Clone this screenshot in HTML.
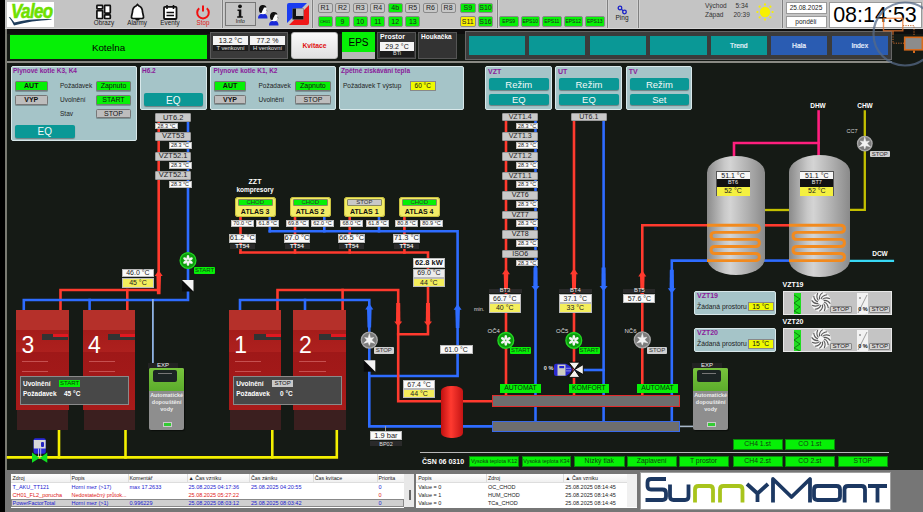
<!DOCTYPE html><html><head><meta charset="utf-8"><style>
html,body{margin:0;padding:0;}
body{width:923px;height:512px;overflow:hidden;background:#151a15;position:relative;font-family:"Liberation Sans",sans-serif;}
.a{position:absolute;}
.t{white-space:nowrap;overflow:visible;}
</style></head><body>
<div class="a" style="left:0px;top:0px;width:5px;height:512px;background:#000"></div>
<div class="a" style="left:5px;top:29px;width:2px;height:441px;background:#7a7a72"></div>
<div class="a" style="left:5px;top:0px;width:918px;height:29px;background:#c4c4c4"></div>
<div class="a" style="left:7px;top:29px;width:916px;height:5px;background:#0e0e0e"></div>
<div class="a" style="left:10px;top:34.7px;width:197px;height:24.2px;background:#06f006"></div>
<div class="a t" style="left:10px;top:34.8px;width:197px;height:25px;line-height:25px;font-size:9.8px;color:#000;font-weight:normal;text-align:center;">Kotelna</div>
<div class="a" style="left:210px;top:32px;width:78px;height:27px;background:#3a3a3a;border:1px solid #5c5c5c;box-sizing:border-box"></div>
<div class="a" style="left:213px;top:36px;width:35px;height:9px;background:#f4f4f4"></div>
<div class="a t" style="left:213px;top:36px;width:35px;height:9px;line-height:9px;font-size:7px;color:#111;font-weight:normal;text-align:center;">13.2 °C</div>
<div class="a" style="left:213px;top:45.2px;width:35px;height:6.3px;background:#1c1c1c"></div>
<div class="a t" style="left:213px;top:45.2px;width:35px;height:6.3px;line-height:6.3px;font-size:5.8px;color:#e0e0e0;font-weight:normal;text-align:center;">T venkovní</div>
<div class="a" style="left:250px;top:36px;width:35px;height:9px;background:#f4f4f4"></div>
<div class="a t" style="left:250px;top:36px;width:35px;height:9px;line-height:9px;font-size:7px;color:#111;font-weight:normal;text-align:center;">77.2 %</div>
<div class="a" style="left:250px;top:45.2px;width:35px;height:6.3px;background:#1c1c1c"></div>
<div class="a t" style="left:250px;top:45.2px;width:35px;height:6.3px;line-height:6.3px;font-size:5.8px;color:#e0e0e0;font-weight:normal;text-align:center;">H venkovní</div>
<div class="a" style="left:291px;top:32px;width:47px;height:27px;background:linear-gradient(#fafafa,#e0e0e0);border:1px solid #bbb;border-radius:3px;box-sizing:border-box"></div>
<div class="a t" style="left:291px;top:32px;width:47px;height:27px;line-height:27px;font-size:6.8px;color:#e01010;font-weight:bold;text-align:center;">Kvitace</div>
<div class="a" style="left:342px;top:32px;width:33px;height:20px;background:#06f006"></div>
<div class="a t" style="left:342px;top:33px;width:33px;height:20px;line-height:20px;font-size:10px;color:#000;font-weight:normal;text-align:center;">EPS</div>
<div class="a" style="left:342px;top:52px;width:33px;height:7px;background:#b8b8b8"></div>
<div class="a" style="left:377px;top:32px;width:39px;height:27px;background:#333;border:1px solid #555;box-sizing:border-box"></div>
<div class="a t" style="left:380px;top:33px;width:36px;height:8px;line-height:8px;font-size:7px;color:#fff;font-weight:bold;text-align:left;">Prostor</div>
<div class="a" style="left:380px;top:42px;width:34px;height:9px;background:#f4f4f4"></div>
<div class="a t" style="left:380px;top:42px;width:34px;height:9px;line-height:9px;font-size:7px;color:#111;font-weight:normal;text-align:center;">29.2 °C</div>
<div class="a" style="left:380px;top:51.3px;width:34px;height:5.7px;background:#1c1c1c"></div>
<div class="a t" style="left:380px;top:51.3px;width:34px;height:5.7px;line-height:5.7px;font-size:5.5px;color:#e0e0e0;font-weight:normal;text-align:center;">BTi</div>
<div class="a" style="left:418px;top:32px;width:39px;height:27px;background:#333;border:1px solid #555;box-sizing:border-box"></div>
<div class="a t" style="left:421px;top:33px;width:36px;height:8px;line-height:8px;font-size:6.5px;color:#fff;font-weight:bold;text-align:left;">Houkačka</div>
<div class="a" style="left:465px;top:31px;width:427px;height:29px;background:#3b3b3b;border:1px solid #666;box-sizing:border-box"></div>
<div class="a" style="left:469px;top:36px;width:56px;height:19px;background:#0a9896"></div>
<div class="a" style="left:529px;top:36px;width:56px;height:19px;background:#0a9896"></div>
<div class="a" style="left:590px;top:36px;width:56px;height:19px;background:#0a9896"></div>
<div class="a" style="left:650px;top:36px;width:56.5px;height:19px;background:#0a9896"></div>
<div class="a" style="left:710.5px;top:36px;width:56.5px;height:19px;background:#0a9896"></div>
<div class="a t" style="left:710.5px;top:36.3px;width:56.5px;height:19px;line-height:19px;font-size:6.8px;color:#eef4ff;font-weight:normal;text-align:center;-webkit-text-stroke:0.2px #eef4ff">Trend</div>
<div class="a" style="left:771px;top:36px;width:56px;height:19px;background:#2a5cb2"></div>
<div class="a t" style="left:771px;top:36.3px;width:56px;height:19px;line-height:19px;font-size:6.8px;color:#eef4ff;font-weight:normal;text-align:center;-webkit-text-stroke:0.2px #eef4ff">Hala</div>
<div class="a" style="left:831.5px;top:36px;width:56.5px;height:19px;background:#2a5cb2"></div>
<div class="a t" style="left:831.5px;top:36.3px;width:56.5px;height:19px;line-height:19px;font-size:6.8px;color:#eef4ff;font-weight:normal;text-align:center;-webkit-text-stroke:0.2px #eef4ff">Index</div>
<div class="a" style="left:7px;top:61px;width:885px;height:2px;background:#8a8a84"></div>
<div class="a" style="left:7px;top:2px;width:47px;height:25px;background:#fff"></div>
<div class="a t" style="left:10.5px;top:1px;width:60px;height:20px;line-height:20px;font-size:21px;color:#6ee000;font-weight:bold;text-align:left;font-style:italic;transform:scaleX(0.81);transform-origin:0 0;letter-spacing:-0.8px;-webkit-text-stroke:0.6px #6ee000">Valeo</div>
<svg class="a" style="left:7px;top:15px" width="48" height="12"><path d="M1.8 2 L3.2 2.2 Q5.5 5 7.5 7.6 Q22 3.6 44.5 4.2 L44.5 4.7 Q24 5.5 8 10.2 L7 10.5 Q5 6 1.8 2 Z" fill="#1f3d5c"/></svg>
<svg class="a" style="left:95px;top:4px" width="18" height="16"><g fill="#fff" stroke="#111" stroke-width="1.7"><rect x="1.9" y="1.3" width="5.7" height="3.6" rx="0.6"/><rect x="1.9" y="6.6" width="5.7" height="7.9" rx="0.6"/><rect x="9.6" y="1.3" width="5.7" height="7.9" rx="0.6"/><rect x="9.6" y="10.9" width="5.7" height="3.6" rx="0.6"/></g></svg>
<div class="a t" style="left:89px;top:20px;width:30px;height:6px;line-height:6px;font-size:6.3px;color:#1a1a1a;font-weight:normal;text-align:center;">Obrazy</div>
<svg class="a" style="left:129px;top:3px" width="17" height="18"><path d="M8.5 1.5 L10 3 Q13.5 4.5 13.5 9 L14.5 13.5 Q15 15 13 15.5 L4 15.5 Q2 15 2.5 13.5 L3.5 9 Q3.5 4.5 7 3 Z" fill="#fff" stroke="#111" stroke-width="1.7"/><ellipse cx="8.5" cy="16.3" rx="2.2" ry="1.2" fill="#111"/></svg>
<div class="a t" style="left:122px;top:20px;width:30px;height:6px;line-height:6px;font-size:6.3px;color:#1a1a1a;font-weight:normal;text-align:center;">Alarmy</div>
<svg class="a" style="left:162px;top:4px" width="17" height="16"><rect x="2" y="2.8" width="12.5" height="12.2" rx="1" fill="#fff" stroke="#111" stroke-width="1.8"/><path d="M5 1 V5 M11.5 1 V5" stroke="#111" stroke-width="1.6"/><path d="M4.5 8.5 H12 M4.5 11.5 H12" stroke="#111" stroke-width="1.4"/></svg>
<div class="a t" style="left:155px;top:20px;width:30px;height:6px;line-height:6px;font-size:6.3px;color:#1a1a1a;font-weight:normal;text-align:center;">Eventy</div>
<svg class="a" style="left:195px;top:4px" width="16" height="16"><path d="M4.2 4.3 A5.8 5.8 0 1 0 11.8 4.3" fill="none" stroke="#f01010" stroke-width="2"/><path d="M8 1.6 V7.6" stroke="#f01010" stroke-width="2"/></svg>
<div class="a t" style="left:188px;top:20px;width:30px;height:6px;line-height:6px;font-size:6.3px;color:#e01818;font-weight:normal;text-align:center;">Stop</div>
<div class="a" style="left:221px;top:0px;width:3px;height:27.6px;background:linear-gradient(90deg,#d0d0d0 0,#d0d0d0 33%,#808080 33%,#808080 66%,#d0d0d0 66%)"></div>
<div class="a" style="left:311px;top:0px;width:3px;height:27.6px;background:linear-gradient(90deg,#d0d0d0 0,#d0d0d0 33%,#808080 33%,#808080 66%,#d0d0d0 66%)"></div>
<div class="a" style="left:496px;top:0px;width:3px;height:27.6px;background:linear-gradient(90deg,#d0d0d0 0,#d0d0d0 33%,#808080 33%,#808080 66%,#d0d0d0 66%)"></div>
<div class="a" style="left:605.5px;top:0px;width:3px;height:27.6px;background:linear-gradient(90deg,#d0d0d0 0,#d0d0d0 33%,#808080 33%,#808080 66%,#d0d0d0 66%)"></div>
<div class="a" style="left:636.5px;top:0px;width:3px;height:27.6px;background:linear-gradient(90deg,#d0d0d0 0,#d0d0d0 33%,#808080 33%,#808080 66%,#d0d0d0 66%)"></div>
<div class="a" style="left:780.5px;top:0px;width:3px;height:27.6px;background:linear-gradient(90deg,#d0d0d0 0,#d0d0d0 33%,#808080 33%,#808080 66%,#d0d0d0 66%)"></div>
<div class="a" style="left:225px;top:2px;width:30.5px;height:24px;background:#c4c4c4;border:1.5px solid #777;box-sizing:border-box"></div>
<svg class="a" style="left:235px;top:4px" width="10" height="15"><circle cx="5" cy="2.3" r="1.9" fill="#111"/><path d="M2.5 5.5 H6.3 V12.3 H7.8 V13.8 H2.2 V12.3 H3.8 V7 H2.5 Z" fill="#111"/></svg>
<div class="a t" style="left:225px;top:18px;width:30.5px;height:6px;line-height:6px;font-size:5.5px;color:#222;font-weight:normal;text-align:center;">Info</div>
<svg class="a" style="left:257px;top:4px" width="11" height="15"><path d="M1 14.5 Q1 10.5 4 10 L8 10 Q10.5 10.5 10.5 14.5 Z" fill="#1a2ad8"/><ellipse cx="6" cy="6" rx="3.6" ry="4.2" fill="#fff"/><path d="M2.2 7.5 Q1 2 5 1 Q9 0.5 9.5 3.5 L7 3.5 Q6.5 5 5.5 6.5 L4.5 9 Q3 9.5 2.2 7.5 Z" fill="#111"/><path d="M9.3 6 L10.4 7" stroke="#333" stroke-width="0.7"/></svg>
<svg class="a" style="left:268px;top:10.5px" width="11" height="15"><path d="M1 14.5 Q1 10.5 4 10 L8 10 Q10.5 10.5 10.5 14.5 Z" fill="#1a2ad8"/><ellipse cx="6" cy="6" rx="3.6" ry="4.2" fill="#fff"/><path d="M2.2 7.5 Q1 2 5 1 Q9 0.5 9.5 3.5 L7 3.5 Q6.5 5 5.5 6.5 L4.5 9 Q3 9.5 2.2 7.5 Z" fill="#111"/><path d="M9.3 6 L10.4 7" stroke="#333" stroke-width="0.7"/></svg>
<svg class="a" style="left:287px;top:2.5px" width="22" height="22"><path d="M2 0 H20 L14.5 5.5 H5.5 V14.5 L0 20 V2 Q0 0 2 0 Z" fill="#1a3cf0"/><path d="M22 2 V20 Q22 22 20 22 H2 L7.5 16.5 H16.5 V7.5 Z" fill="#f01818"/><rect x="5.5" y="5.5" width="11" height="11" fill="#111"/><rect x="9" y="5.5" width="7.5" height="7.5" fill="#bdbdbd"/></svg>
<div class="a" style="left:317.5px;top:2.5px;width:15px;height:10.5px;background:#c8c8c8;border:1px solid #8a8a8a;border-radius:2px;box-sizing:border-box"></div>
<div class="a t" style="left:317.5px;top:2.5px;width:15px;height:10.5px;line-height:10.5px;font-size:7px;color:#222;font-weight:normal;text-align:center;">R1</div>
<div class="a" style="left:335px;top:2.5px;width:15px;height:10.5px;background:#c8c8c8;border:1px solid #8a8a8a;border-radius:2px;box-sizing:border-box"></div>
<div class="a t" style="left:335px;top:2.5px;width:15px;height:10.5px;line-height:10.5px;font-size:7px;color:#222;font-weight:normal;text-align:center;">R2</div>
<div class="a" style="left:352.7px;top:2.5px;width:15px;height:10.5px;background:#c8c8c8;border:1px solid #8a8a8a;border-radius:2px;box-sizing:border-box"></div>
<div class="a t" style="left:352.7px;top:2.5px;width:15px;height:10.5px;line-height:10.5px;font-size:7px;color:#222;font-weight:normal;text-align:center;">R3</div>
<div class="a" style="left:370.3px;top:2.5px;width:15px;height:10.5px;background:#c8c8c8;border:1px solid #8a8a8a;border-radius:2px;box-sizing:border-box"></div>
<div class="a t" style="left:370.3px;top:2.5px;width:15px;height:10.5px;line-height:10.5px;font-size:7px;color:#222;font-weight:normal;text-align:center;">R4</div>
<div class="a" style="left:387.7px;top:2.5px;width:15px;height:10.5px;background:#06f006;border:1px solid #8a8a8a;border-radius:2px;box-sizing:border-box"></div>
<div class="a t" style="left:387.7px;top:2.5px;width:15px;height:10.5px;line-height:10.5px;font-size:7px;color:#222;font-weight:normal;text-align:center;">4b</div>
<div class="a" style="left:405.3px;top:2.5px;width:15px;height:10.5px;background:#c8c8c8;border:1px solid #8a8a8a;border-radius:2px;box-sizing:border-box"></div>
<div class="a t" style="left:405.3px;top:2.5px;width:15px;height:10.5px;line-height:10.5px;font-size:7px;color:#222;font-weight:normal;text-align:center;">R5</div>
<div class="a" style="left:423px;top:2.5px;width:15px;height:10.5px;background:#c8c8c8;border:1px solid #8a8a8a;border-radius:2px;box-sizing:border-box"></div>
<div class="a t" style="left:423px;top:2.5px;width:15px;height:10.5px;line-height:10.5px;font-size:7px;color:#222;font-weight:normal;text-align:center;">R6</div>
<div class="a" style="left:440.6px;top:2.5px;width:15px;height:10.5px;background:#c8c8c8;border:1px solid #8a8a8a;border-radius:2px;box-sizing:border-box"></div>
<div class="a t" style="left:440.6px;top:2.5px;width:15px;height:10.5px;line-height:10.5px;font-size:7px;color:#222;font-weight:normal;text-align:center;">R8</div>
<div class="a" style="left:317.5px;top:15.5px;width:15px;height:11.5px;background:#06f006;border:1px solid #8a8a8a;border-radius:2px;box-sizing:border-box"></div>
<div class="a t" style="left:317.5px;top:15.5px;width:15px;height:11.5px;line-height:11.5px;font-size:4px;color:#222;font-weight:normal;text-align:center;">CH01</div>
<div class="a" style="left:335px;top:15.5px;width:15px;height:11.5px;background:#06f006;border:1px solid #8a8a8a;border-radius:2px;box-sizing:border-box"></div>
<div class="a t" style="left:335px;top:15.5px;width:15px;height:11.5px;line-height:11.5px;font-size:7px;color:#222;font-weight:normal;text-align:center;">9</div>
<div class="a" style="left:352.7px;top:15.5px;width:15px;height:11.5px;background:#06f006;border:1px solid #8a8a8a;border-radius:2px;box-sizing:border-box"></div>
<div class="a t" style="left:352.7px;top:15.5px;width:15px;height:11.5px;line-height:11.5px;font-size:7px;color:#222;font-weight:normal;text-align:center;">10</div>
<div class="a" style="left:370.3px;top:15.5px;width:15px;height:11.5px;background:#06f006;border:1px solid #8a8a8a;border-radius:2px;box-sizing:border-box"></div>
<div class="a t" style="left:370.3px;top:15.5px;width:15px;height:11.5px;line-height:11.5px;font-size:7px;color:#222;font-weight:normal;text-align:center;">11</div>
<div class="a" style="left:387.7px;top:15.5px;width:15px;height:11.5px;background:#06f006;border:1px solid #8a8a8a;border-radius:2px;box-sizing:border-box"></div>
<div class="a t" style="left:387.7px;top:15.5px;width:15px;height:11.5px;line-height:11.5px;font-size:7px;color:#222;font-weight:normal;text-align:center;">12</div>
<div class="a" style="left:405.3px;top:15.5px;width:15px;height:11.5px;background:#06f006;border:1px solid #8a8a8a;border-radius:2px;box-sizing:border-box"></div>
<div class="a t" style="left:405.3px;top:15.5px;width:15px;height:11.5px;line-height:11.5px;font-size:7px;color:#222;font-weight:normal;text-align:center;">13</div>
<div class="a" style="left:460px;top:2.5px;width:15.5px;height:10.5px;background:#06f006;border:1px solid #8a8a8a;border-radius:2px;box-sizing:border-box"></div>
<div class="a t" style="left:460px;top:2.5px;width:15.5px;height:10.5px;line-height:10.5px;font-size:7px;color:#222;font-weight:normal;text-align:center;">S9</div>
<div class="a" style="left:477.8px;top:2.5px;width:15.5px;height:10.5px;background:#06f006;border:1px solid #8a8a8a;border-radius:2px;box-sizing:border-box"></div>
<div class="a t" style="left:477.8px;top:2.5px;width:15.5px;height:10.5px;line-height:10.5px;font-size:7px;color:#222;font-weight:normal;text-align:center;">S10</div>
<div class="a" style="left:460px;top:15.5px;width:15.5px;height:11.5px;background:#f7f000;border:1px solid #8a8a8a;border-radius:2px;box-sizing:border-box"></div>
<div class="a t" style="left:460px;top:15.5px;width:15.5px;height:11.5px;line-height:11.5px;font-size:7px;color:#222;font-weight:normal;text-align:center;">S11</div>
<div class="a" style="left:477.8px;top:15.5px;width:15.5px;height:11.5px;background:#06f006;border:1px solid #8a8a8a;border-radius:2px;box-sizing:border-box"></div>
<div class="a t" style="left:477.8px;top:15.5px;width:15.5px;height:11.5px;line-height:11.5px;font-size:7px;color:#222;font-weight:normal;text-align:center;">S16</div>
<div class="a" style="left:499.0px;top:15.5px;width:19.5px;height:11.5px;background:#06f006;border:1px solid #8a8a8a;border-radius:2px;box-sizing:border-box"></div>
<div class="a t" style="left:499.0px;top:15.5px;width:19.5px;height:11.5px;line-height:11.5px;font-size:5px;color:#222;font-weight:normal;text-align:center;">EPS9</div>
<div class="a" style="left:520.5px;top:15.5px;width:19.5px;height:11.5px;background:#06f006;border:1px solid #8a8a8a;border-radius:2px;box-sizing:border-box"></div>
<div class="a t" style="left:520.5px;top:15.5px;width:19.5px;height:11.5px;line-height:11.5px;font-size:5px;color:#222;font-weight:normal;text-align:center;">EPS10</div>
<div class="a" style="left:542.0px;top:15.5px;width:19.5px;height:11.5px;background:#06f006;border:1px solid #8a8a8a;border-radius:2px;box-sizing:border-box"></div>
<div class="a t" style="left:542.0px;top:15.5px;width:19.5px;height:11.5px;line-height:11.5px;font-size:5px;color:#222;font-weight:normal;text-align:center;">EPS11</div>
<div class="a" style="left:563.5px;top:15.5px;width:19.5px;height:11.5px;background:#06f006;border:1px solid #8a8a8a;border-radius:2px;box-sizing:border-box"></div>
<div class="a t" style="left:563.5px;top:15.5px;width:19.5px;height:11.5px;line-height:11.5px;font-size:5px;color:#222;font-weight:normal;text-align:center;">EPS12</div>
<div class="a" style="left:585.0px;top:15.5px;width:19.5px;height:11.5px;background:#06f006;border:1px solid #8a8a8a;border-radius:2px;box-sizing:border-box"></div>
<div class="a t" style="left:585.0px;top:15.5px;width:19.5px;height:11.5px;line-height:11.5px;font-size:5px;color:#222;font-weight:normal;text-align:center;">EPS13</div>
<svg class="a" style="left:617px;top:5px" width="11" height="10"><circle cx="3" cy="3" r="1.8" fill="none" stroke="#1a22c8" stroke-width="1.3"/><circle cx="7.5" cy="7" r="1.8" fill="none" stroke="#1a22c8" stroke-width="1.3"/><path d="M4.3 4.3 L6.2 5.7" stroke="#1a22c8" stroke-width="1.2"/></svg>
<div class="a t" style="left:607px;top:14px;width:30px;height:7px;line-height:7px;font-size:6.5px;color:#222;font-weight:normal;text-align:center;">Ping</div>
<div class="a t" style="left:705px;top:1.5px;width:30px;height:7px;line-height:7px;font-size:6.5px;color:#333;font-weight:normal;text-align:left;">Východ</div>
<div class="a t" style="left:735.5px;top:1.5px;width:20px;height:7px;line-height:7px;font-size:6.5px;color:#333;font-weight:normal;text-align:left;">5:34</div>
<div class="a t" style="left:705px;top:11px;width:30px;height:7px;line-height:7px;font-size:6.5px;color:#333;font-weight:normal;text-align:left;">Západ</div>
<div class="a t" style="left:733.5px;top:11px;width:20px;height:7px;line-height:7px;font-size:6.5px;color:#333;font-weight:normal;text-align:left;">20:39</div>
<svg class="a" style="left:754px;top:1px" width="22" height="22"><g fill="#f8f000"><circle cx="11" cy="11" r="5.2"/><circle cx="18.6" cy="11.0" r="1.1"/><circle cx="16.374012415117463" cy="16.374010658917918" r="1.1"/><circle cx="11.000002483641214" cy="18.599999999999593" r="1.1"/><circle cx="5.6259910972822" cy="16.374014171316432" r="1.1"/><circle cx="3.400000000001624" cy="11.000004967282427" r="1.1"/><circle cx="5.625984072485171" cy="5.625992853482894" r="1.1"/><circle cx="10.999992549076362" cy="3.4000000000036534" r="1.1"/><circle cx="16.374005390315844" cy="5.625982316287351" r="1.1"/></g></svg>
<div class="a" style="left:785.5px;top:2px;width:41px;height:11.5px;background:#fff;border:1px solid #9a9a9a;box-sizing:border-box"></div>
<div class="a t" style="left:785.5px;top:2px;width:41px;height:11.5px;line-height:11.5px;font-size:6.5px;color:#222;font-weight:normal;text-align:center;">25.08.2025</div>
<div class="a" style="left:785.5px;top:15.5px;width:41px;height:12px;background:#fff;border:1px solid #9a9a9a;box-sizing:border-box"></div>
<div class="a t" style="left:785.5px;top:15.5px;width:41px;height:12px;line-height:12px;font-size:6.5px;color:#222;font-weight:normal;text-align:center;">pondělí</div>
<div class="a" style="left:828.5px;top:2px;width:93px;height:26px;background:#fff;border:1px solid #9a9a9a;box-sizing:border-box"></div>
<div class="a t" style="left:828.5px;top:2px;width:93px;height:26px;line-height:26px;font-size:21.5px;color:#000;font-weight:normal;text-align:center;">08:14:53</div>
<div class="a" style="left:5px;top:27.6px;width:918px;height:1.4px;background:#d6d6d6"></div>
<div class="a" style="left:11px;top:66px;width:126px;height:75px;background:#a5c4c8;border:1px solid #d8e8ea;border-radius:2px;box-sizing:border-box"></div>
<div class="a t" style="left:13px;top:67px;width:120px;height:8px;line-height:8px;font-size:6.5px;color:#8a1a9a;font-weight:bold;text-align:left;">Plynové kotle K3, K4</div>
<div class="a" style="left:15px;top:81px;width:32.5px;height:10px;background:#06f006;border:1px solid #777;border-radius:1.5px;box-sizing:border-box;box-shadow:0 1px 0 rgba(0,0,0,0.25)"></div>
<div class="a t" style="left:15px;top:81px;width:32.5px;height:10px;line-height:10px;font-size:7px;color:#111;font-weight:bold;text-align:center;">AUT</div>
<div class="a" style="left:15px;top:95px;width:32.5px;height:9.5px;background:#bdbdbd;border:1px solid #777;border-radius:1.5px;box-sizing:border-box;box-shadow:0 1px 0 rgba(0,0,0,0.25)"></div>
<div class="a t" style="left:15px;top:95px;width:32.5px;height:9.5px;line-height:9.5px;font-size:7px;color:#111;font-weight:bold;text-align:center;">VYP</div>
<div class="a t" style="left:60px;top:81px;width:40px;height:10px;line-height:10px;font-size:6.5px;color:#1e1e1e;font-weight:normal;text-align:left;">Požadavek</div>
<div class="a t" style="left:60px;top:95px;width:40px;height:9.5px;line-height:9.5px;font-size:6.5px;color:#1e1e1e;font-weight:normal;text-align:left;">Uvolnění</div>
<div class="a t" style="left:60px;top:108.5px;width:40px;height:9.5px;line-height:9.5px;font-size:6.5px;color:#1e1e1e;font-weight:normal;text-align:left;">Stav</div>
<div class="a" style="left:96px;top:81px;width:35px;height:10px;background:#06f006;border:1px solid #777;border-radius:1.5px;box-sizing:border-box;box-shadow:0 1px 0 rgba(0,0,0,0.25)"></div>
<div class="a t" style="left:96px;top:81px;width:35px;height:10px;line-height:10px;font-size:7px;color:#111;font-weight:normal;text-align:center;">Zapnuto</div>
<div class="a" style="left:96px;top:95px;width:35px;height:9.5px;background:#06f006;border:1px solid #777;border-radius:1.5px;box-sizing:border-box;box-shadow:0 1px 0 rgba(0,0,0,0.25)"></div>
<div class="a t" style="left:96px;top:95px;width:35px;height:9.5px;line-height:9.5px;font-size:7px;color:#111;font-weight:normal;text-align:center;">START</div>
<div class="a" style="left:96px;top:108.5px;width:35px;height:9.5px;background:#bdbdbd;border:1px solid #777;border-radius:1.5px;box-sizing:border-box;box-shadow:0 1px 0 rgba(0,0,0,0.25)"></div>
<div class="a t" style="left:96px;top:108.5px;width:35px;height:9.5px;line-height:9.5px;font-size:7px;color:#111;font-weight:normal;text-align:center;">STOP</div>
<div class="a" style="left:15px;top:124.5px;width:59.5px;height:13px;background:#0a9896;border-radius:2px;box-shadow:0 1px 1px rgba(0,0,0,0.35)"></div>
<div class="a t" style="left:15px;top:125.0px;width:59.5px;height:13px;line-height:13px;font-size:10px;color:#f4f8f8;font-weight:normal;text-align:center;">EQ</div>
<div class="a" style="left:139.5px;top:66px;width:67.5px;height:43.5px;background:#a5c4c8;border:1px solid #d8e8ea;border-radius:2px;box-sizing:border-box"></div>
<div class="a t" style="left:142px;top:67px;width:40px;height:8px;line-height:8px;font-size:6.5px;color:#8a1a9a;font-weight:bold;text-align:left;">H6.2</div>
<div class="a" style="left:143.5px;top:93px;width:59.5px;height:13px;background:#0a9896;border-radius:2px;box-shadow:0 1px 1px rgba(0,0,0,0.35)"></div>
<div class="a t" style="left:143.5px;top:93.5px;width:59.5px;height:13px;line-height:13px;font-size:10px;color:#f4f8f8;font-weight:normal;text-align:center;">EQ</div>
<div class="a" style="left:210px;top:66px;width:125.5px;height:43.5px;background:#a5c4c8;border:1px solid #d8e8ea;border-radius:2px;box-sizing:border-box"></div>
<div class="a t" style="left:213.5px;top:67px;width:120px;height:8px;line-height:8px;font-size:6.5px;color:#8a1a9a;font-weight:bold;text-align:left;">Plynové kotle K1, K2</div>
<div class="a" style="left:213.8px;top:81px;width:32.5px;height:10px;background:#06f006;border:1px solid #777;border-radius:1.5px;box-sizing:border-box;box-shadow:0 1px 0 rgba(0,0,0,0.25)"></div>
<div class="a t" style="left:213.8px;top:81px;width:32.5px;height:10px;line-height:10px;font-size:7px;color:#111;font-weight:bold;text-align:center;">AUT</div>
<div class="a" style="left:213.8px;top:94.6px;width:32.5px;height:9.6px;background:#bdbdbd;border:1px solid #777;border-radius:1.5px;box-sizing:border-box;box-shadow:0 1px 0 rgba(0,0,0,0.25)"></div>
<div class="a t" style="left:213.8px;top:94.6px;width:32.5px;height:9.6px;line-height:9.6px;font-size:7px;color:#111;font-weight:bold;text-align:center;">VYP</div>
<div class="a t" style="left:258.5px;top:81px;width:40px;height:10px;line-height:10px;font-size:6.5px;color:#1e1e1e;font-weight:normal;text-align:left;">Požadavek</div>
<div class="a t" style="left:258.5px;top:94.6px;width:40px;height:9.6px;line-height:9.6px;font-size:6.5px;color:#1e1e1e;font-weight:normal;text-align:left;">Uvolnění</div>
<div class="a" style="left:295.2px;top:81px;width:35.4px;height:10px;background:#06f006;border:1px solid #777;border-radius:1.5px;box-sizing:border-box;box-shadow:0 1px 0 rgba(0,0,0,0.25)"></div>
<div class="a t" style="left:295.2px;top:81px;width:35.4px;height:10px;line-height:10px;font-size:7px;color:#111;font-weight:normal;text-align:center;">Zapnuto</div>
<div class="a" style="left:295.2px;top:94.6px;width:35.4px;height:9.6px;background:#bdbdbd;border:1px solid #777;border-radius:1.5px;box-sizing:border-box;box-shadow:0 1px 0 rgba(0,0,0,0.25)"></div>
<div class="a t" style="left:295.2px;top:94.6px;width:35.4px;height:9.6px;line-height:9.6px;font-size:7px;color:#111;font-weight:normal;text-align:center;">STOP</div>
<div class="a" style="left:338.7px;top:66px;width:125.6px;height:43.5px;background:#a5c4c8;border:1px solid #d8e8ea;border-radius:2px;box-sizing:border-box"></div>
<div class="a t" style="left:341px;top:67px;width:120px;height:8px;line-height:8px;font-size:6.5px;color:#8a1a9a;font-weight:bold;text-align:left;">Zpětné získávání tepla</div>
<div class="a t" style="left:343px;top:81px;width:70px;height:9.5px;line-height:9.5px;font-size:6.5px;color:#1e1e1e;font-weight:normal;text-align:left;">Požadavek T výstup</div>
<div class="a" style="left:410px;top:81px;width:25.5px;height:9.5px;background:#eefa00;border:1px solid #888;box-sizing:border-box"></div>
<div class="a t" style="left:410px;top:81px;width:25.5px;height:9.5px;line-height:9.5px;font-size:6.5px;color:#111;font-weight:normal;text-align:center;">60 °C</div>
<div class="a" style="left:485px;top:66px;width:67px;height:43.6px;background:#a5c4c8;border:1px solid #d8e8ea;border-radius:2px;box-sizing:border-box"></div>
<div class="a t" style="left:488px;top:67.5px;width:30px;height:8px;line-height:8px;font-size:7px;color:#8a1a9a;font-weight:bold;text-align:left;">VZT</div>
<div class="a" style="left:489px;top:78px;width:59.5px;height:12.3px;background:#0a9896;border-radius:2px;box-shadow:0 1px 1px rgba(0,0,0,0.35)"></div>
<div class="a t" style="left:489px;top:78.5px;width:59.5px;height:12.3px;line-height:12.3px;font-size:9.5px;color:#f4f8f8;font-weight:normal;text-align:center;">Režim</div>
<div class="a" style="left:489px;top:93.7px;width:59.5px;height:11.8px;background:#0a9896;border-radius:2px;box-shadow:0 1px 1px rgba(0,0,0,0.35)"></div>
<div class="a t" style="left:489px;top:94.2px;width:59.5px;height:11.8px;line-height:11.8px;font-size:9.5px;color:#f4f8f8;font-weight:normal;text-align:center;">EQ</div>
<div class="a" style="left:555px;top:66px;width:67.4px;height:43.6px;background:#a5c4c8;border:1px solid #d8e8ea;border-radius:2px;box-sizing:border-box"></div>
<div class="a t" style="left:558px;top:67.5px;width:30px;height:8px;line-height:8px;font-size:7px;color:#8a1a9a;font-weight:bold;text-align:left;">UT</div>
<div class="a" style="left:559px;top:78px;width:59.900000000000006px;height:12.3px;background:#0a9896;border-radius:2px;box-shadow:0 1px 1px rgba(0,0,0,0.35)"></div>
<div class="a t" style="left:559px;top:78.5px;width:59.900000000000006px;height:12.3px;line-height:12.3px;font-size:9.5px;color:#f4f8f8;font-weight:normal;text-align:center;">Režim</div>
<div class="a" style="left:559px;top:93.7px;width:59.900000000000006px;height:11.8px;background:#0a9896;border-radius:2px;box-shadow:0 1px 1px rgba(0,0,0,0.35)"></div>
<div class="a t" style="left:559px;top:94.2px;width:59.900000000000006px;height:11.8px;line-height:11.8px;font-size:9.5px;color:#f4f8f8;font-weight:normal;text-align:center;">EQ</div>
<div class="a" style="left:625.8px;top:66px;width:66.7px;height:43.6px;background:#a5c4c8;border:1px solid #d8e8ea;border-radius:2px;box-sizing:border-box"></div>
<div class="a t" style="left:628.8px;top:67.5px;width:30px;height:8px;line-height:8px;font-size:7px;color:#8a1a9a;font-weight:bold;text-align:left;">TV</div>
<div class="a" style="left:629.8px;top:78px;width:59.2px;height:12.3px;background:#0a9896;border-radius:2px;box-shadow:0 1px 1px rgba(0,0,0,0.35)"></div>
<div class="a t" style="left:629.8px;top:78.5px;width:59.2px;height:12.3px;line-height:12.3px;font-size:9.5px;color:#f4f8f8;font-weight:normal;text-align:center;">Režim</div>
<div class="a" style="left:629.8px;top:93.7px;width:59.2px;height:11.8px;background:#0a9896;border-radius:2px;box-shadow:0 1px 1px rgba(0,0,0,0.35)"></div>
<div class="a t" style="left:629.8px;top:94.2px;width:59.2px;height:11.8px;line-height:11.8px;font-size:9.5px;color:#f4f8f8;font-weight:normal;text-align:center;">Set</div>
<svg class="a" style="left:0;top:0" width="923" height="512"><path d="M158.7 121 L158.7 290 L60.5 290 L60.5 310" stroke="#ff3a2e" stroke-width="2.6" fill="none" stroke-linejoin="miter" stroke-linecap="square"/><path d="M127.3 290 L127.3 310" stroke="#ff3a2e" stroke-width="2.6" fill="none" stroke-linejoin="miter" stroke-linecap="square"/><path d="M154.7 276.0 L158.7 270.2 L162.7 276.0 Z" fill="#ff3a2e"/><path d="M156.39999999999998 275.2 H161.0 L160.5 294.2 H156.89999999999998 Z" fill="#ff3a2e"/><path d="M188 121 L188 300 L23.8 300 L23.8 310" stroke="#2e6cff" stroke-width="2.6" fill="none" stroke-linejoin="miter" stroke-linecap="square"/><path d="M89.6 300 L89.6 310" stroke="#2e6cff" stroke-width="2.6" fill="none" stroke-linejoin="miter" stroke-linecap="square"/><path d="M152.9 300 L152.9 363" stroke="#8fb2e2" stroke-width="1.8" fill="none" stroke-linejoin="miter" stroke-linecap="square"/><path d="M240.5 217 L240.5 252.5" stroke="#ff3a2e" stroke-width="2.6" fill="none" stroke-linejoin="miter" stroke-linecap="square"/><path d="M295 217 L295 252.5" stroke="#ff3a2e" stroke-width="2.6" fill="none" stroke-linejoin="miter" stroke-linecap="square"/><path d="M349.7 217 L349.7 252.5" stroke="#ff3a2e" stroke-width="2.6" fill="none" stroke-linejoin="miter" stroke-linecap="square"/><path d="M404.4 217 L404.4 252.5" stroke="#ff3a2e" stroke-width="2.6" fill="none" stroke-linejoin="miter" stroke-linecap="square"/><path d="M240.5 252.5 L428 252.5 L428 334.2 L398.2 334.2" stroke="#ff3a2e" stroke-width="2.6" fill="none" stroke-linejoin="miter" stroke-linecap="square"/><path d="M269.8 217 L269.8 231.2" stroke="#2e6cff" stroke-width="2.6" fill="none" stroke-linejoin="miter" stroke-linecap="square"/><path d="M324.3 217 L324.3 231.2" stroke="#2e6cff" stroke-width="2.6" fill="none" stroke-linejoin="miter" stroke-linecap="square"/><path d="M379 217 L379 231.2" stroke="#2e6cff" stroke-width="2.6" fill="none" stroke-linejoin="miter" stroke-linecap="square"/><path d="M269.8 231.2 L457.6 231.2 L457.6 376 L369.3 376" stroke="#2e6cff" stroke-width="2.6" fill="none" stroke-linejoin="miter" stroke-linecap="square"/><path d="M277.5 310 L277.5 290 L398.2 290 L398.2 401.2 L492 401.2" stroke="#ff3a2e" stroke-width="2.6" fill="none" stroke-linejoin="miter" stroke-linecap="square"/><path d="M342.6 290 L342.6 310" stroke="#ff3a2e" stroke-width="2.6" fill="none" stroke-linejoin="miter" stroke-linecap="square"/><path d="M394.2 321.40000000000003 L398.2 326.6 L402.2 321.40000000000003 Z" fill="#ff3a2e"/><path d="M396.0 322.0 H400.4 L400.2 303.0 H396.2 Z" fill="#ff3a2e"/><path d="M424 321.40000000000003 L428 326.6 L432 321.40000000000003 Z" fill="#ff3a2e"/><path d="M425.8 322.0 H430.2 L430 303.0 H426 Z" fill="#ff3a2e"/><path d="M240 310 L240 300 L369.3 300 L369.3 426.4 L492 426.4" stroke="#2e6cff" stroke-width="2.6" fill="none" stroke-linejoin="miter" stroke-linecap="square"/><path d="M305 300 L305 310" stroke="#2e6cff" stroke-width="2.6" fill="none" stroke-linejoin="miter" stroke-linecap="square"/><path d="M365.3 309.40000000000003 L369.3 303.6 L373.3 309.40000000000003 Z" fill="#2e6cff"/><path d="M367.0 308.6 H371.6 L371.1 327.6 H367.5 Z" fill="#2e6cff"/><path d="M453.6 309.7 L457.6 303.9 L461.6 309.7 Z" fill="#2e6cff"/><path d="M455.3 308.9 H459.90000000000003 L459.40000000000003 327.9 H455.8 Z" fill="#2e6cff"/><path d="M385.5 426.4 L385.5 431" stroke="#9a9a9a" stroke-width="1" fill="none" stroke-linejoin="miter" stroke-linecap="square"/><path d="M8 457.4 L336.8 457.4 L336.8 430" stroke="#f4f000" stroke-width="2.6" fill="none" stroke-linejoin="miter" stroke-linecap="square"/><path d="M59 430 L59 457.4" stroke="#f4f000" stroke-width="2.6" fill="none" stroke-linejoin="miter" stroke-linecap="square"/><path d="M125.5 430 L125.5 457.4" stroke="#f4f000" stroke-width="2.6" fill="none" stroke-linejoin="miter" stroke-linecap="square"/><path d="M272.3 430 L272.3 457.4" stroke="#f4f000" stroke-width="2.6" fill="none" stroke-linejoin="miter" stroke-linecap="square"/><path d="M506 121 L506 395" stroke="#ff3a2e" stroke-width="2.6" fill="none" stroke-linejoin="miter" stroke-linecap="square"/><path d="M535.5 121 L535.5 421" stroke="#2e6cff" stroke-width="2.6" fill="none" stroke-linejoin="miter" stroke-linecap="square"/><path d="M574 121 L574 395" stroke="#ff3a2e" stroke-width="2.6" fill="none" stroke-linejoin="miter" stroke-linecap="square"/><path d="M603.6 121 L603.6 421" stroke="#2e6cff" stroke-width="2.6" fill="none" stroke-linejoin="miter" stroke-linecap="square"/><path d="M502 274.3 L506 268.5 L510 274.3 Z" fill="#ff3a2e"/><path d="M503.7 273.5 H508.3 L507.8 292.5 H504.2 Z" fill="#ff3a2e"/><path d="M531.5 286.0 L535.5 291.2 L539.5 286.0 Z" fill="#2e6cff"/><path d="M533.3 286.59999999999997 H537.7 L537.5 267.59999999999997 H533.5 Z" fill="#2e6cff"/><path d="M570 274.3 L574 268.5 L578 274.3 Z" fill="#ff3a2e"/><path d="M571.7 273.5 H576.3 L575.8 292.5 H572.2 Z" fill="#ff3a2e"/><path d="M599.6 286.0 L603.6 291.2 L607.6 286.0 Z" fill="#2e6cff"/><path d="M601.4 286.59999999999997 H605.8000000000001 L605.6 267.59999999999997 H601.6 Z" fill="#2e6cff"/><path d="M642.3 395 L642.3 225.3 L707 225.3" stroke="#ff3a2e" stroke-width="2.6" fill="none" stroke-linejoin="miter" stroke-linecap="square"/><path d="M765 225.3 L789 225.3" stroke="#ff3a2e" stroke-width="2.6" fill="none" stroke-linejoin="miter" stroke-linecap="square"/><path d="M638.3 276.40000000000003 L642.3 270.6 L646.3 276.40000000000003 Z" fill="#ff3a2e"/><path d="M640.0 275.6 H644.5999999999999 L644.0999999999999 294.6 H640.5 Z" fill="#ff3a2e"/><path d="M667.8 288.2 L671.8 293.4 L675.8 288.2 Z" fill="#2e6cff"/><path d="M669.5999999999999 288.79999999999995 H674.0 L673.8 269.79999999999995 H669.8 Z" fill="#2e6cff"/><path d="M671.8 421 L671.8 260.6 L707 260.6" stroke="#2e6cff" stroke-width="2.6" fill="none" stroke-linejoin="miter" stroke-linecap="square"/><path d="M765 260.6 L789 260.6" stroke="#2e6cff" stroke-width="2.6" fill="none" stroke-linejoin="miter" stroke-linecap="square"/><path d="M850 260.8 L893 260.8" stroke="#38d8f4" stroke-width="2.2" fill="none" stroke-linejoin="miter" stroke-linecap="square"/><path d="M734 156 L734 143 L818.6 143" stroke="#ff1f7e" stroke-width="2.6" fill="none" stroke-linejoin="miter" stroke-linecap="square"/><path d="M818.6 111.5 L818.6 155" stroke="#ff1f7e" stroke-width="2.6" fill="none" stroke-linejoin="miter" stroke-linecap="square"/><path d="M765 210 L789 210" stroke="#c4c000" stroke-width="2.3" fill="none" stroke-linejoin="miter" stroke-linecap="square"/><path d="M850 209.8 L864.8 209.8 L864.8 111.5" stroke="#c4c000" stroke-width="2.3" fill="none" stroke-linejoin="miter" stroke-linecap="square"/><path d="M575 370 L603.6 370" stroke="#2e6cff" stroke-width="2.6" fill="none" stroke-linejoin="miter" stroke-linecap="square"/><path d="M680 426.4 L693 426.4" stroke="#a8b8c8" stroke-width="1.6" fill="none" stroke-linejoin="miter" stroke-linecap="square"/></svg>
<div class="a" style="left:16.9px;top:410px;width:51.2px;height:20px;background:#3b1f1f"></div>
<div class="a" style="left:15.9px;top:309.5px;width:52.7px;height:100.5px;background:linear-gradient(#b5302a 0,#b5302a 20px,#a51c1a 20px,#ad201e 42px,#9f1818 42.5px,#a81b1a 100%)"></div>
<div class="a" style="left:41.5px;top:333.5px;width:26.6px;height:6.3px;background:#333"></div>
<div class="a" style="left:53.4px;top:333.5px;width:14.7px;height:3.8px;background:#e01820"></div>
<div class="a" style="left:21.9px;top:361px;width:26.5px;height:1px;background:#c65050"></div>
<div class="a" style="left:21.9px;top:371.2px;width:26.5px;height:1px;background:#c65050"></div>
<div class="a t" style="left:21.4px;top:334.5px;width:20px;height:20px;line-height:20px;font-size:23px;color:#fff;font-weight:normal;text-align:left;">3</div>
<div class="a" style="left:83.6px;top:410px;width:51.2px;height:20px;background:#3b1f1f"></div>
<div class="a" style="left:82.6px;top:309.5px;width:52.7px;height:100.5px;background:linear-gradient(#b5302a 0,#b5302a 20px,#a51c1a 20px,#ad201e 42px,#9f1818 42.5px,#a81b1a 100%)"></div>
<div class="a" style="left:108.19999999999999px;top:333.5px;width:26.6px;height:6.3px;background:#333"></div>
<div class="a" style="left:120.1px;top:333.5px;width:14.7px;height:3.8px;background:#e01820"></div>
<div class="a" style="left:88.6px;top:361px;width:26.5px;height:1px;background:#c65050"></div>
<div class="a" style="left:88.6px;top:371.2px;width:26.5px;height:1px;background:#c65050"></div>
<div class="a t" style="left:88.1px;top:334.5px;width:20px;height:20px;line-height:20px;font-size:23px;color:#fff;font-weight:normal;text-align:left;">4</div>
<div class="a" style="left:229.7px;top:410px;width:51.2px;height:20px;background:#3b1f1f"></div>
<div class="a" style="left:228.7px;top:309.5px;width:52.7px;height:100.5px;background:linear-gradient(#b5302a 0,#b5302a 20px,#a51c1a 20px,#ad201e 42px,#9f1818 42.5px,#a81b1a 100%)"></div>
<div class="a" style="left:254.29999999999998px;top:333.5px;width:26.6px;height:6.3px;background:#333"></div>
<div class="a" style="left:266.2px;top:333.5px;width:14.7px;height:3.8px;background:#e01820"></div>
<div class="a" style="left:234.7px;top:361px;width:26.5px;height:1px;background:#c65050"></div>
<div class="a" style="left:234.7px;top:371.2px;width:26.5px;height:1px;background:#c65050"></div>
<div class="a t" style="left:234.2px;top:334.5px;width:20px;height:20px;line-height:20px;font-size:23px;color:#fff;font-weight:normal;text-align:left;">1</div>
<div class="a" style="left:294.4px;top:410px;width:51.2px;height:20px;background:#3b1f1f"></div>
<div class="a" style="left:293.4px;top:309.5px;width:52.7px;height:100.5px;background:linear-gradient(#b5302a 0,#b5302a 20px,#a51c1a 20px,#ad201e 42px,#9f1818 42.5px,#a81b1a 100%)"></div>
<div class="a" style="left:319.0px;top:333.5px;width:26.6px;height:6.3px;background:#333"></div>
<div class="a" style="left:330.9px;top:333.5px;width:14.7px;height:3.8px;background:#e01820"></div>
<div class="a" style="left:299.4px;top:361px;width:26.5px;height:1px;background:#c65050"></div>
<div class="a" style="left:299.4px;top:371.2px;width:26.5px;height:1px;background:#c65050"></div>
<div class="a t" style="left:298.9px;top:334.5px;width:20px;height:20px;line-height:20px;font-size:23px;color:#fff;font-weight:normal;text-align:left;">2</div>
<div class="a" style="left:20px;top:375.7px;width:109.3px;height:29.3px;background:#484848;border:1px solid #8a8a8a;box-sizing:border-box"></div>
<div class="a t" style="left:23px;top:378.5px;width:40px;height:9px;line-height:9px;font-size:6.5px;color:#fff;font-weight:bold;text-align:left;">Uvolnění</div>
<div class="a t" style="left:23px;top:388.5px;width:40px;height:9px;line-height:9px;font-size:6.5px;color:#fff;font-weight:bold;text-align:left;">Požadavek</div>
<div class="a" style="left:59px;top:379.8px;width:21.0px;height:6.8px;background:#06f006"></div>
<div class="a t" style="left:59px;top:379.8px;width:21px;height:6.8px;line-height:6.8px;font-size:6px;color:#0a3a0a;font-weight:normal;text-align:center;">START</div>
<div class="a t" style="left:64px;top:388.5px;width:30px;height:9px;line-height:9px;font-size:6.5px;color:#fff;font-weight:bold;text-align:left;">45 °C</div>
<div class="a" style="left:233.2px;top:375.7px;width:108.8px;height:29.3px;background:#484848;border:1px solid #8a8a8a;box-sizing:border-box"></div>
<div class="a t" style="left:236.2px;top:378.5px;width:40px;height:9px;line-height:9px;font-size:6.5px;color:#fff;font-weight:bold;text-align:left;">Uvolnění</div>
<div class="a t" style="left:236.2px;top:388.5px;width:40px;height:9px;line-height:9px;font-size:6.5px;color:#fff;font-weight:bold;text-align:left;">Požadavek</div>
<div class="a" style="left:272.2px;top:379.8px;width:21.0px;height:6.8px;background:#c8c8c8"></div>
<div class="a t" style="left:272.2px;top:379.8px;width:21px;height:6.8px;line-height:6.8px;font-size:6px;color:#111;font-weight:normal;text-align:center;">STOP</div>
<div class="a t" style="left:280px;top:388.5px;width:30px;height:9px;line-height:9px;font-size:6.5px;color:#fff;font-weight:bold;text-align:left;">0 °C</div>
<div class="a" style="left:148px;top:362.7px;width:30px;height:5px;background:#222"></div>
<div class="a t" style="left:148px;top:362.2px;width:30px;height:6px;line-height:6px;font-size:6px;color:#eee;font-weight:normal;text-align:center;">EXP</div>
<div class="a" style="left:149px;top:367.7px;width:35.3px;height:62.5px;background:#8e8e8e;border-radius:2px;box-shadow:1px 1px 1px rgba(0,0,0,.5)"></div>
<div class="a" style="left:149px;top:367.7px;width:35.3px;height:23.3px;background:linear-gradient(#78c43c,#5cac2c);border-radius:2px 2px 0 0"></div>
<div class="a" style="left:152.5px;top:370px;width:24.5px;height:12.3px;background:#1c2424;border-radius:2px"></div>
<div class="a" style="left:158px;top:373px;width:14px;height:1px;background:#777"></div>
<div class="a t" style="left:149px;top:392px;width:35.3px;font-size:5.5px;line-height:7px;color:#ececec;text-align:center;font-weight:bold;white-space:normal">Automatické dopouštění vody</div>
<div class="a" style="left:163px;top:421.5px;width:7px;height:3px;background:#3c3;border:0.5px solid #ccc"></div>
<div class="a" style="left:692px;top:362.7px;width:30px;height:5px;background:#222"></div>
<div class="a t" style="left:692px;top:362.2px;width:30px;height:6px;line-height:6px;font-size:6px;color:#eee;font-weight:normal;text-align:center;">EXP</div>
<div class="a" style="left:693px;top:367.7px;width:35.3px;height:62.5px;background:#8e8e8e;border-radius:2px;box-shadow:1px 1px 1px rgba(0,0,0,.5)"></div>
<div class="a" style="left:693px;top:367.7px;width:35.3px;height:23.3px;background:linear-gradient(#78c43c,#5cac2c);border-radius:2px 2px 0 0"></div>
<div class="a" style="left:696.5px;top:370px;width:24.5px;height:12.3px;background:#1c2424;border-radius:2px"></div>
<div class="a" style="left:702px;top:373px;width:14px;height:1px;background:#777"></div>
<div class="a t" style="left:693px;top:392px;width:35.3px;font-size:5.5px;line-height:7px;color:#ececec;text-align:center;font-weight:bold;white-space:normal">Automatické dopouštění vody</div>
<div class="a" style="left:707px;top:421.5px;width:7px;height:3px;background:#3c3;border:0.5px solid #ccc"></div>
<div class="a" style="left:155px;top:112.5px;width:36.3px;height:9px;background:#c9c9c9;border:1px solid #9a9a9a;border-radius:1px;box-sizing:border-box"></div>
<div class="a t" style="left:155px;top:112.5px;width:36.3px;height:9px;line-height:9px;font-size:7.5px;color:#222;font-weight:normal;text-align:center;">UT6.2</div>
<div class="a" style="left:155px;top:122.6px;width:23px;height:6.5px;background:#fafafa;border:1px solid #bbb;box-sizing:border-box"></div>
<div class="a t" style="left:155px;top:122.6px;width:23px;height:6.5px;line-height:6.5px;font-size:5.4px;color:#222;font-weight:normal;text-align:center;">28.3 °C</div>
<div class="a" style="left:155px;top:132.2px;width:36.3px;height:8.8px;background:#c9c9c9;border:1px solid #9a9a9a;border-radius:1px;box-sizing:border-box"></div>
<div class="a t" style="left:155px;top:132.2px;width:36.3px;height:8.8px;line-height:8.8px;font-size:7.5px;color:#222;font-weight:normal;text-align:center;">VZT53</div>
<div class="a" style="left:168.5px;top:142.0px;width:23px;height:7px;background:#fafafa;border:1px solid #bbb;box-sizing:border-box"></div>
<div class="a t" style="left:168.5px;top:142.0px;width:23px;height:7px;line-height:7px;font-size:5.4px;color:#222;font-weight:normal;text-align:center;">28.3 °C</div>
<div class="a" style="left:155px;top:151.79999999999998px;width:36.3px;height:8.8px;background:#c9c9c9;border:1px solid #9a9a9a;border-radius:1px;box-sizing:border-box"></div>
<div class="a t" style="left:155px;top:151.79999999999998px;width:36.3px;height:8.8px;line-height:8.8px;font-size:7.5px;color:#222;font-weight:normal;text-align:center;">VZT52.1</div>
<div class="a" style="left:168.5px;top:161.6px;width:23px;height:7px;background:#fafafa;border:1px solid #bbb;box-sizing:border-box"></div>
<div class="a t" style="left:168.5px;top:161.6px;width:23px;height:7px;line-height:7px;font-size:5.4px;color:#222;font-weight:normal;text-align:center;">28.3 °C</div>
<div class="a" style="left:155px;top:171.39999999999998px;width:36.3px;height:8.8px;background:#c9c9c9;border:1px solid #9a9a9a;border-radius:1px;box-sizing:border-box"></div>
<div class="a t" style="left:155px;top:171.39999999999998px;width:36.3px;height:8.8px;line-height:8.8px;font-size:7.5px;color:#222;font-weight:normal;text-align:center;">VZT52.1</div>
<div class="a" style="left:168.5px;top:181.2px;width:23px;height:7px;background:#fafafa;border:1px solid #bbb;box-sizing:border-box"></div>
<div class="a t" style="left:168.5px;top:181.2px;width:23px;height:7px;line-height:7px;font-size:5.4px;color:#222;font-weight:normal;text-align:center;">28.3 °C</div>
<div class="a" style="left:502.1px;top:112.9px;width:36.2px;height:8.5px;background:#c9c9c9;border:1px solid #9a9a9a;border-radius:1px;box-sizing:border-box"></div>
<div class="a t" style="left:502.1px;top:112.9px;width:36.2px;height:8.5px;line-height:8.5px;font-size:7px;color:#222;font-weight:normal;text-align:center;">VZT1.4</div>
<div class="a" style="left:515.8px;top:122.7px;width:22.5px;height:6.8px;background:#fafafa;border:1px solid #bbb;box-sizing:border-box"></div>
<div class="a t" style="left:515.8px;top:122.7px;width:22.5px;height:6.8px;line-height:6.8px;font-size:5.4px;color:#222;font-weight:normal;text-align:center;">28.3 °C</div>
<div class="a" style="left:502.1px;top:132.45000000000002px;width:36.2px;height:8.5px;background:#c9c9c9;border:1px solid #9a9a9a;border-radius:1px;box-sizing:border-box"></div>
<div class="a t" style="left:502.1px;top:132.45000000000002px;width:36.2px;height:8.5px;line-height:8.5px;font-size:7px;color:#222;font-weight:normal;text-align:center;">VZT1.3</div>
<div class="a" style="left:515.8px;top:142.25000000000003px;width:22.5px;height:6.8px;background:#fafafa;border:1px solid #bbb;box-sizing:border-box"></div>
<div class="a t" style="left:515.8px;top:142.25000000000003px;width:22.5px;height:6.8px;line-height:6.8px;font-size:5.4px;color:#222;font-weight:normal;text-align:center;">28.3 °C</div>
<div class="a" style="left:502.1px;top:152.0px;width:36.2px;height:8.5px;background:#c9c9c9;border:1px solid #9a9a9a;border-radius:1px;box-sizing:border-box"></div>
<div class="a t" style="left:502.1px;top:152.0px;width:36.2px;height:8.5px;line-height:8.5px;font-size:7px;color:#222;font-weight:normal;text-align:center;">VZT1.2</div>
<div class="a" style="left:515.8px;top:161.8px;width:22.5px;height:6.8px;background:#fafafa;border:1px solid #bbb;box-sizing:border-box"></div>
<div class="a t" style="left:515.8px;top:161.8px;width:22.5px;height:6.8px;line-height:6.8px;font-size:5.4px;color:#222;font-weight:normal;text-align:center;">28.3 °C</div>
<div class="a" style="left:502.1px;top:171.55px;width:36.2px;height:8.5px;background:#c9c9c9;border:1px solid #9a9a9a;border-radius:1px;box-sizing:border-box"></div>
<div class="a t" style="left:502.1px;top:171.55px;width:36.2px;height:8.5px;line-height:8.5px;font-size:7px;color:#222;font-weight:normal;text-align:center;">VZT1.1</div>
<div class="a" style="left:515.8px;top:181.35000000000002px;width:22.5px;height:6.8px;background:#fafafa;border:1px solid #bbb;box-sizing:border-box"></div>
<div class="a t" style="left:515.8px;top:181.35000000000002px;width:22.5px;height:6.8px;line-height:6.8px;font-size:5.4px;color:#222;font-weight:normal;text-align:center;">28.3 °C</div>
<div class="a" style="left:502.1px;top:191.10000000000002px;width:36.2px;height:8.5px;background:#c9c9c9;border:1px solid #9a9a9a;border-radius:1px;box-sizing:border-box"></div>
<div class="a t" style="left:502.1px;top:191.10000000000002px;width:36.2px;height:8.5px;line-height:8.5px;font-size:7px;color:#222;font-weight:normal;text-align:center;">VZT6</div>
<div class="a" style="left:515.8px;top:200.90000000000003px;width:22.5px;height:6.8px;background:#fafafa;border:1px solid #bbb;box-sizing:border-box"></div>
<div class="a t" style="left:515.8px;top:200.90000000000003px;width:22.5px;height:6.8px;line-height:6.8px;font-size:5.4px;color:#222;font-weight:normal;text-align:center;">28.3 °C</div>
<div class="a" style="left:502.1px;top:210.65px;width:36.2px;height:8.5px;background:#c9c9c9;border:1px solid #9a9a9a;border-radius:1px;box-sizing:border-box"></div>
<div class="a t" style="left:502.1px;top:210.65px;width:36.2px;height:8.5px;line-height:8.5px;font-size:7px;color:#222;font-weight:normal;text-align:center;">VZT7</div>
<div class="a" style="left:515.8px;top:220.45000000000002px;width:22.5px;height:6.8px;background:#fafafa;border:1px solid #bbb;box-sizing:border-box"></div>
<div class="a t" style="left:515.8px;top:220.45000000000002px;width:22.5px;height:6.8px;line-height:6.8px;font-size:5.4px;color:#222;font-weight:normal;text-align:center;">28.3 °C</div>
<div class="a" style="left:502.1px;top:230.20000000000002px;width:36.2px;height:8.5px;background:#c9c9c9;border:1px solid #9a9a9a;border-radius:1px;box-sizing:border-box"></div>
<div class="a t" style="left:502.1px;top:230.20000000000002px;width:36.2px;height:8.5px;line-height:8.5px;font-size:7px;color:#222;font-weight:normal;text-align:center;">VZT8</div>
<div class="a" style="left:515.8px;top:240.00000000000003px;width:22.5px;height:6.8px;background:#fafafa;border:1px solid #bbb;box-sizing:border-box"></div>
<div class="a t" style="left:515.8px;top:240.00000000000003px;width:22.5px;height:6.8px;line-height:6.8px;font-size:5.4px;color:#222;font-weight:normal;text-align:center;">28.3 °C</div>
<div class="a" style="left:502.1px;top:249.75px;width:36.2px;height:8.5px;background:#c9c9c9;border:1px solid #9a9a9a;border-radius:1px;box-sizing:border-box"></div>
<div class="a t" style="left:502.1px;top:249.75px;width:36.2px;height:8.5px;line-height:8.5px;font-size:7px;color:#222;font-weight:normal;text-align:center;">ISO6</div>
<div class="a" style="left:515.8px;top:259.55px;width:22.5px;height:6.8px;background:#fafafa;border:1px solid #bbb;box-sizing:border-box"></div>
<div class="a t" style="left:515.8px;top:259.55px;width:22.5px;height:6.8px;line-height:6.8px;font-size:5.4px;color:#222;font-weight:normal;text-align:center;">28.3 °C</div>
<div class="a" style="left:571px;top:112.9px;width:35.6px;height:8.5px;background:#c9c9c9;border:1px solid #9a9a9a;border-radius:1px;box-sizing:border-box"></div>
<div class="a t" style="left:571px;top:112.9px;width:35.6px;height:8.5px;line-height:8.5px;font-size:7px;color:#222;font-weight:normal;text-align:center;">UT6.1</div>
<div class="a" style="left:121.9px;top:268.9px;width:32.1px;height:8.2px;background:#fafafa;border:1px solid #bbb;box-sizing:border-box"></div>
<div class="a t" style="left:121.9px;top:268.9px;width:32.1px;height:8.2px;line-height:8.2px;font-size:7px;color:#222;font-weight:normal;text-align:center;">46.0 °C</div>
<div class="a" style="left:121.9px;top:278px;width:32.1px;height:10px;background:#f4ee5c;border:1px solid #bbb;box-sizing:border-box"></div>
<div class="a t" style="left:121.9px;top:278px;width:32.1px;height:10px;line-height:10px;font-size:7px;color:#222;font-weight:normal;text-align:center;">45 °C</div>
<div class="a" style="left:488.5px;top:288.7px;width:33px;height:4.3px;background:#2a2a2a"></div>
<div class="a t" style="left:488.5px;top:287.9px;width:33px;height:5.5px;line-height:5.5px;font-size:5.8px;color:#e8e8e8;font-weight:normal;text-align:center;">BT3</div>
<div class="a" style="left:488.5px;top:294px;width:32.5px;height:9.4px;background:#fafafa;border:1px solid #bbb;box-sizing:border-box"></div>
<div class="a t" style="left:488.5px;top:294px;width:32.5px;height:9.4px;line-height:9.4px;font-size:7px;color:#222;font-weight:normal;text-align:center;">66.7 °C</div>
<div class="a" style="left:488.5px;top:303.4px;width:32.5px;height:9.6px;background:#f4ee5c;border:1px solid #bbb;box-sizing:border-box"></div>
<div class="a t" style="left:488.5px;top:303.4px;width:32.5px;height:9.6px;line-height:9.6px;font-size:7px;color:#222;font-weight:normal;text-align:center;">40 °C</div>
<div class="a" style="left:558.8px;top:288.7px;width:33.2px;height:4.3px;background:#2a2a2a"></div>
<div class="a t" style="left:558.8px;top:287.9px;width:33.2px;height:5.5px;line-height:5.5px;font-size:5.8px;color:#e8e8e8;font-weight:normal;text-align:center;">BT4</div>
<div class="a" style="left:558.8px;top:294px;width:33px;height:9.4px;background:#fafafa;border:1px solid #bbb;box-sizing:border-box"></div>
<div class="a t" style="left:558.8px;top:294px;width:33px;height:9.4px;line-height:9.4px;font-size:7px;color:#222;font-weight:normal;text-align:center;">37.1 °C</div>
<div class="a" style="left:558.8px;top:303.4px;width:33px;height:9.6px;background:#f4ee5c;border:1px solid #bbb;box-sizing:border-box"></div>
<div class="a t" style="left:558.8px;top:303.4px;width:33px;height:9.6px;line-height:9.6px;font-size:7px;color:#222;font-weight:normal;text-align:center;">33 °C</div>
<div class="a" style="left:623.3px;top:289px;width:32.2px;height:4.3px;background:#2a2a2a"></div>
<div class="a t" style="left:623.3px;top:288.2px;width:32.2px;height:5.5px;line-height:5.5px;font-size:5.8px;color:#e8e8e8;font-weight:normal;text-align:center;">BT5</div>
<div class="a" style="left:623.3px;top:294px;width:32.2px;height:9.3px;background:#fafafa;border:1px solid #bbb;box-sizing:border-box"></div>
<div class="a t" style="left:623.3px;top:294px;width:32.2px;height:9.3px;line-height:9.3px;font-size:7px;color:#222;font-weight:normal;text-align:center;">57.6 °C</div>
<div class="a t" style="left:474px;top:305px;width:16px;height:8px;line-height:8px;font-size:5.5px;color:#ddd;font-weight:normal;text-align:left;">min.</div>
<div class="a t" style="left:230px;top:178px;width:50px;height:8px;line-height:8px;font-size:7px;color:#fff;font-weight:bold;text-align:center;">ZZT</div>
<div class="a t" style="left:230px;top:186px;width:50px;height:8px;line-height:8px;font-size:6.5px;color:#fff;font-weight:bold;text-align:center;">kompresory</div>
<div class="a" style="left:234.7px;top:197px;width:41px;height:19.8px;background:#f2ec66;border-radius:3.5px;box-shadow:inset 0 0 0 1px #c8c040"></div>
<div class="a" style="left:237.5px;top:198.7px;width:35.5px;height:7.6px;background:#06f006;border:1px solid #8a8a60;box-sizing:border-box;border-radius:1px"></div>
<div class="a t" style="left:237.5px;top:198.7px;width:35.5px;height:7.6px;line-height:7.6px;font-size:6px;color:#333;font-weight:normal;text-align:center;">CHOD</div>
<div class="a t" style="left:234.7px;top:206.8px;width:41px;height:10px;line-height:10px;font-size:7px;color:#111;font-weight:bold;text-align:center;">ATLAS 3</div>
<div class="a" style="left:289.7px;top:197px;width:41px;height:19.8px;background:#f2ec66;border-radius:3.5px;box-shadow:inset 0 0 0 1px #c8c040"></div>
<div class="a" style="left:292.5px;top:198.7px;width:35.5px;height:7.6px;background:#06f006;border:1px solid #8a8a60;box-sizing:border-box;border-radius:1px"></div>
<div class="a t" style="left:292.5px;top:198.7px;width:35.5px;height:7.6px;line-height:7.6px;font-size:6px;color:#333;font-weight:normal;text-align:center;">CHOD</div>
<div class="a t" style="left:289.7px;top:206.8px;width:41px;height:10px;line-height:10px;font-size:7px;color:#111;font-weight:bold;text-align:center;">ATLAS 2</div>
<div class="a" style="left:343.8px;top:197px;width:41px;height:19.8px;background:#f2ec66;border-radius:3.5px;box-shadow:inset 0 0 0 1px #c8c040"></div>
<div class="a" style="left:346.6px;top:198.7px;width:35.5px;height:7.6px;background:#c8c8c8;border:1px solid #8a8a60;box-sizing:border-box;border-radius:1px"></div>
<div class="a t" style="left:346.6px;top:198.7px;width:35.5px;height:7.6px;line-height:7.6px;font-size:6px;color:#333;font-weight:normal;text-align:center;">STOP</div>
<div class="a t" style="left:343.8px;top:206.8px;width:41px;height:10px;line-height:10px;font-size:7px;color:#111;font-weight:bold;text-align:center;">ATLAS 1</div>
<div class="a" style="left:398.7px;top:197px;width:41px;height:19.8px;background:#f2ec66;border-radius:3.5px;box-shadow:inset 0 0 0 1px #c8c040"></div>
<div class="a" style="left:401.5px;top:198.7px;width:35.5px;height:7.6px;background:#06f006;border:1px solid #8a8a60;box-sizing:border-box;border-radius:1px"></div>
<div class="a t" style="left:401.5px;top:198.7px;width:35.5px;height:7.6px;line-height:7.6px;font-size:6px;color:#333;font-weight:normal;text-align:center;">CHOD</div>
<div class="a t" style="left:398.7px;top:206.8px;width:41px;height:10px;line-height:10px;font-size:7px;color:#111;font-weight:bold;text-align:center;">ATLAS 4</div>
<div class="a" style="left:231px;top:219.8px;width:23px;height:7.6px;background:#fafafa;border:1px solid #bbb;box-sizing:border-box"></div>
<div class="a t" style="left:231px;top:219.8px;width:23px;height:7.6px;line-height:7.6px;font-size:5.5px;color:#222;font-weight:normal;text-align:center;">70.0 °C</div>
<div class="a" style="left:256.3px;top:219.8px;width:23px;height:7.6px;background:#fafafa;border:1px solid #bbb;box-sizing:border-box"></div>
<div class="a t" style="left:256.3px;top:219.8px;width:23px;height:7.6px;line-height:7.6px;font-size:5.5px;color:#222;font-weight:normal;text-align:center;">61.8 °C</div>
<div class="a" style="left:285.6px;top:219.8px;width:23px;height:7.6px;background:#fafafa;border:1px solid #bbb;box-sizing:border-box"></div>
<div class="a t" style="left:285.6px;top:219.8px;width:23px;height:7.6px;line-height:7.6px;font-size:5.5px;color:#222;font-weight:normal;text-align:center;">69.8 °C</div>
<div class="a" style="left:311px;top:219.8px;width:23px;height:7.6px;background:#fafafa;border:1px solid #bbb;box-sizing:border-box"></div>
<div class="a t" style="left:311px;top:219.8px;width:23px;height:7.6px;line-height:7.6px;font-size:5.5px;color:#222;font-weight:normal;text-align:center;">62.0 °C</div>
<div class="a" style="left:340.1px;top:219.8px;width:23px;height:7.6px;background:#fafafa;border:1px solid #bbb;box-sizing:border-box"></div>
<div class="a t" style="left:340.1px;top:219.8px;width:23px;height:7.6px;line-height:7.6px;font-size:5.5px;color:#222;font-weight:normal;text-align:center;">68.0 °C</div>
<div class="a" style="left:366px;top:219.8px;width:23px;height:7.6px;background:#fafafa;border:1px solid #bbb;box-sizing:border-box"></div>
<div class="a t" style="left:366px;top:219.8px;width:23px;height:7.6px;line-height:7.6px;font-size:5.5px;color:#222;font-weight:normal;text-align:center;">61.8 °C</div>
<div class="a" style="left:395px;top:219.8px;width:23px;height:7.6px;background:#fafafa;border:1px solid #bbb;box-sizing:border-box"></div>
<div class="a t" style="left:395px;top:219.8px;width:23px;height:7.6px;line-height:7.6px;font-size:5.5px;color:#222;font-weight:normal;text-align:center;">80.8 °C</div>
<div class="a" style="left:420px;top:219.8px;width:23px;height:7.6px;background:#fafafa;border:1px solid #bbb;box-sizing:border-box"></div>
<div class="a t" style="left:420px;top:219.8px;width:23px;height:7.6px;line-height:7.6px;font-size:5.5px;color:#222;font-weight:normal;text-align:center;">80.9 °C</div>
<div class="a" style="left:228.9px;top:233.9px;width:26.9px;height:8.8px;background:#fafafa;border:1px solid #bbb;box-sizing:border-box"></div>
<div class="a t" style="left:228.9px;top:233.9px;width:26.9px;height:8.8px;line-height:8.8px;font-size:7.5px;color:#222;font-weight:normal;text-align:center;">61.2 °C</div>
<div class="a" style="left:229.9px;top:243.5px;width:25px;height:5px;background:#2a2a2a"></div>
<div class="a t" style="left:228.9px;top:243px;width:26.9px;height:6px;line-height:6px;font-size:6px;color:#eee;font-weight:bold;text-align:center;">TT54</div>
<div class="a" style="left:283.5px;top:233.9px;width:26.9px;height:8.8px;background:#fafafa;border:1px solid #bbb;box-sizing:border-box"></div>
<div class="a t" style="left:283.5px;top:233.9px;width:26.9px;height:8.8px;line-height:8.8px;font-size:7.5px;color:#222;font-weight:normal;text-align:center;">67.0 °C</div>
<div class="a" style="left:284.5px;top:243.5px;width:25px;height:5px;background:#2a2a2a"></div>
<div class="a t" style="left:283.5px;top:243px;width:26.9px;height:6px;line-height:6px;font-size:6px;color:#eee;font-weight:bold;text-align:center;">TT54</div>
<div class="a" style="left:338.2px;top:233.9px;width:26.9px;height:8.8px;background:#fafafa;border:1px solid #bbb;box-sizing:border-box"></div>
<div class="a t" style="left:338.2px;top:233.9px;width:26.9px;height:8.8px;line-height:8.8px;font-size:7.5px;color:#222;font-weight:normal;text-align:center;">66.5 °C</div>
<div class="a" style="left:339.2px;top:243.5px;width:25px;height:5px;background:#2a2a2a"></div>
<div class="a t" style="left:338.2px;top:243px;width:26.9px;height:6px;line-height:6px;font-size:6px;color:#eee;font-weight:bold;text-align:center;">TT54</div>
<div class="a" style="left:393px;top:233.9px;width:26.9px;height:8.8px;background:#fafafa;border:1px solid #bbb;box-sizing:border-box"></div>
<div class="a t" style="left:393px;top:233.9px;width:26.9px;height:8.8px;line-height:8.8px;font-size:7.5px;color:#222;font-weight:normal;text-align:center;">71.3 °C</div>
<div class="a" style="left:394px;top:243.5px;width:25px;height:5px;background:#2a2a2a"></div>
<div class="a t" style="left:393px;top:243px;width:26.9px;height:6px;line-height:6px;font-size:6px;color:#eee;font-weight:bold;text-align:center;">TT54</div>
<div class="a" style="left:412.5px;top:257.5px;width:32.8px;height:10.4px;background:#fafafa;border:1px solid #bbb;box-sizing:border-box"></div>
<div class="a t" style="left:412.5px;top:257.5px;width:32.8px;height:10.4px;line-height:10.4px;font-size:7.5px;color:#111;font-weight:bold;text-align:center;">62.8 kW</div>
<div class="a" style="left:412.5px;top:268.9px;width:32.8px;height:8.8px;background:#ececec;border:1px solid #bbb;box-sizing:border-box"></div>
<div class="a t" style="left:412.5px;top:268.9px;width:32.8px;height:8.8px;line-height:8.8px;font-size:7px;color:#222;font-weight:normal;text-align:center;">69.0 °C</div>
<div class="a" style="left:412.5px;top:277.7px;width:32.8px;height:9.5px;background:#f4ee5c;border:1px solid #bbb;box-sizing:border-box"></div>
<div class="a t" style="left:412.5px;top:277.7px;width:32.8px;height:9.5px;line-height:9.5px;font-size:7px;color:#222;font-weight:normal;text-align:center;">44 °C</div>
<div class="a" style="left:439.8px;top:345.2px;width:32.8px;height:9px;background:#fafafa;border:1px solid #bbb;box-sizing:border-box"></div>
<div class="a t" style="left:439.8px;top:345.2px;width:32.8px;height:9px;line-height:9px;font-size:7px;color:#222;font-weight:normal;text-align:center;">61.0 °C</div>
<div class="a" style="left:402.9px;top:380px;width:32.3px;height:9px;background:#fafafa;border:1px solid #bbb;box-sizing:border-box"></div>
<div class="a t" style="left:402.9px;top:380px;width:32.3px;height:9px;line-height:9px;font-size:7px;color:#222;font-weight:normal;text-align:center;">67.4 °C</div>
<div class="a" style="left:402.9px;top:389px;width:32.3px;height:9.4px;background:#f4ee5c;border:1px solid #bbb;box-sizing:border-box"></div>
<div class="a t" style="left:402.9px;top:389px;width:32.3px;height:9.4px;line-height:9.4px;font-size:7px;color:#222;font-weight:normal;text-align:center;">44 °C</div>
<div class="a" style="left:369.5px;top:430.7px;width:32.8px;height:9.1px;background:#fafafa;border:1px solid #bbb;box-sizing:border-box"></div>
<div class="a t" style="left:369.5px;top:430.7px;width:32.8px;height:9.1px;line-height:9.1px;font-size:7.5px;color:#222;font-weight:normal;text-align:center;">1.9 bar</div>
<div class="a" style="left:370px;top:441px;width:32px;height:5px;background:#2a2a2a"></div>
<div class="a t" style="left:370px;top:440.5px;width:32px;height:6px;line-height:6px;font-size:5.5px;color:#ddd;font-weight:normal;text-align:center;">BP02</div>
<div class="a" style="left:441.2px;top:385.6px;width:21.8px;height:52.5px;background:linear-gradient(90deg,#c01010,#ff3a30 45%,#c41414);border-radius:10px/5px"></div>
<div class="a" style="left:492px;top:395.2px;width:187.7px;height:11.8px;background:#6e6e6e;border:1.3px solid #e02a2a;box-sizing:border-box"></div>
<div class="a" style="left:492px;top:420.7px;width:187.7px;height:11.7px;background:#6e6e6e;border:1.3px solid #3a6ae8;box-sizing:border-box"></div>
<div class="a" style="left:500.3px;top:384.3px;width:40.3px;height:8.6px;background:#06f006"></div>
<div class="a t" style="left:500.3px;top:384.3px;width:40.3px;height:8.6px;line-height:8.6px;font-size:6.8px;color:#0a2a0a;font-weight:normal;text-align:center;">AUTOMAT</div>
<div class="a" style="left:568.7px;top:384.3px;width:40.3px;height:8.6px;background:#06f006"></div>
<div class="a t" style="left:568.7px;top:384.3px;width:40.3px;height:8.6px;line-height:8.6px;font-size:6.8px;color:#0a2a0a;font-weight:normal;text-align:center;">KOMFORT</div>
<div class="a" style="left:637.3px;top:384.3px;width:40.3px;height:8.6px;background:#06f006"></div>
<div class="a t" style="left:637.3px;top:384.3px;width:40.3px;height:8.6px;line-height:8.6px;font-size:6.8px;color:#0a2a0a;font-weight:normal;text-align:center;">AUTOMAT</div>
<svg class="a" style="left:0;top:0" width="923" height="512"><circle cx="188" cy="260.5" r="7.9" fill="#0c9c0c" stroke="#22d822" stroke-width="1.3"/><ellipse cx="188.00" cy="257.51" rx="2.45" ry="1.41" transform="rotate(-90 188.00 257.51)" fill="#f4f4f4"/><ellipse cx="190.59" cy="259.00" rx="2.45" ry="1.41" transform="rotate(-30 190.59 259.00)" fill="#f4f4f4"/><ellipse cx="190.59" cy="262.00" rx="2.45" ry="1.41" transform="rotate(30 190.59 262.00)" fill="#f4f4f4"/><ellipse cx="188.00" cy="263.49" rx="2.45" ry="1.41" transform="rotate(90 188.00 263.49)" fill="#f4f4f4"/><ellipse cx="185.41" cy="262.00" rx="2.45" ry="1.41" transform="rotate(150 185.41 262.00)" fill="#f4f4f4"/><ellipse cx="185.41" cy="259.00" rx="2.45" ry="1.41" transform="rotate(210 185.41 259.00)" fill="#f4f4f4"/><circle cx="505.8" cy="340.4" r="7.9" fill="#0c9c0c" stroke="#22d822" stroke-width="1.3"/><ellipse cx="505.80" cy="337.41" rx="2.45" ry="1.41" transform="rotate(-90 505.80 337.41)" fill="#f4f4f4"/><ellipse cx="508.39" cy="338.90" rx="2.45" ry="1.41" transform="rotate(-30 508.39 338.90)" fill="#f4f4f4"/><ellipse cx="508.39" cy="341.90" rx="2.45" ry="1.41" transform="rotate(30 508.39 341.90)" fill="#f4f4f4"/><ellipse cx="505.80" cy="343.39" rx="2.45" ry="1.41" transform="rotate(90 505.80 343.39)" fill="#f4f4f4"/><ellipse cx="503.21" cy="341.90" rx="2.45" ry="1.41" transform="rotate(150 503.21 341.90)" fill="#f4f4f4"/><ellipse cx="503.21" cy="338.90" rx="2.45" ry="1.41" transform="rotate(210 503.21 338.90)" fill="#f4f4f4"/><circle cx="573.8" cy="340.4" r="7.9" fill="#0c9c0c" stroke="#22d822" stroke-width="1.3"/><ellipse cx="573.80" cy="337.41" rx="2.45" ry="1.41" transform="rotate(-90 573.80 337.41)" fill="#f4f4f4"/><ellipse cx="576.39" cy="338.90" rx="2.45" ry="1.41" transform="rotate(-30 576.39 338.90)" fill="#f4f4f4"/><ellipse cx="576.39" cy="341.90" rx="2.45" ry="1.41" transform="rotate(30 576.39 341.90)" fill="#f4f4f4"/><ellipse cx="573.80" cy="343.39" rx="2.45" ry="1.41" transform="rotate(90 573.80 343.39)" fill="#f4f4f4"/><ellipse cx="571.21" cy="341.90" rx="2.45" ry="1.41" transform="rotate(150 571.21 341.90)" fill="#f4f4f4"/><ellipse cx="571.21" cy="338.90" rx="2.45" ry="1.41" transform="rotate(210 571.21 338.90)" fill="#f4f4f4"/><circle cx="369.3" cy="340.1" r="8.0" fill="#7c7c7c" stroke="#a8a8a8" stroke-width="1.3"/><polygon points="369.30,333.50 370.50,338.02 373.98,337.40 371.70,340.10 375.02,343.40 370.50,342.18 369.30,345.50 368.10,342.18 363.58,343.40 366.90,340.10 364.62,337.40 368.10,338.02" fill="#f2f2f2" stroke="#f2f2f2" stroke-width="0.4" stroke-linejoin="round"/><circle cx="642.3" cy="339.8" r="8.0" fill="#7c7c7c" stroke="#a8a8a8" stroke-width="1.3"/><polygon points="642.30,333.20 643.50,337.72 646.98,337.10 644.70,339.80 648.02,343.10 643.50,341.88 642.30,345.20 641.10,341.88 636.58,343.10 639.90,339.80 637.62,337.10 641.10,337.72" fill="#f2f2f2" stroke="#f2f2f2" stroke-width="0.4" stroke-linejoin="round"/><circle cx="864.8" cy="143.6" r="7.3" fill="#7c7c7c" stroke="#a8a8a8" stroke-width="1.3"/><polygon points="864.80,137.00 866.00,141.52 869.48,140.90 867.20,143.60 870.52,146.90 866.00,145.68 864.80,149.00 863.60,145.68 859.08,146.90 862.40,143.60 860.12,140.90 863.60,141.52" fill="#f2f2f2" stroke="#f2f2f2" stroke-width="0.4" stroke-linejoin="round"/><rect x="182" y="280" width="11.5" height="11.5" fill="#0a0a0a"/><path d="M182 280 H193.5 V291.5 Z" fill="#f4f4f4"/><rect x="363.8" y="360.2" width="11.5" height="11.5" fill="#0a0a0a"/><path d="M363.8 360.2 H375.3 V371.7 Z" fill="#f4f4f4"/><path d="M568.6 362.2 H579.9 L574.5 369.6 Z M568.6 377.4 H579.9 L574.5 369.6 Z M583.3 364.6 V374.6 L574.5 369.6 Z" fill="#f4f4f0" stroke="#000" stroke-width="0.9" stroke-linejoin="round"/><path d="M556 363.8 H566 Q571 366 572 369.6 Q571 373.5 566 376.1 H556 Q554 376.1 554 374 V366 Q554 363.8 556 363.8 Z" fill="#2a2ad0"/><rect x="557.5" y="364.6" width="8" height="11" fill="#cfcfc0"/><rect x="559.3" y="366" width="4.8" height="2.2" fill="#2020d0"/><path d="M566 368.3 H571 M566 370.9 H571" stroke="#b8b8e8" stroke-width="0.7"/></svg>
<div class="a" style="left:194.3px;top:267px;width:20.5px;height:6.6px;background:#06f006;border-radius:1px"></div>
<div class="a t" style="left:194.3px;top:267px;width:20.5px;height:6.6px;line-height:6.6px;font-size:6px;color:#143a14;font-weight:normal;text-align:center;">START</div>
<div class="a" style="left:510px;top:347.2px;width:21px;height:7px;background:#06f006;border-radius:1px"></div>
<div class="a t" style="left:510px;top:347.2px;width:21px;height:7px;line-height:7px;font-size:6px;color:#143a14;font-weight:normal;text-align:center;">START</div>
<div class="a" style="left:578.5px;top:347.2px;width:21px;height:7px;background:#06f006;border-radius:1px"></div>
<div class="a t" style="left:578.5px;top:347.2px;width:21px;height:7px;line-height:7px;font-size:6px;color:#143a14;font-weight:normal;text-align:center;">START</div>
<div class="a" style="left:373.5px;top:347px;width:20.5px;height:6.8px;background:#d0d0d0;border-radius:1px"></div>
<div class="a t" style="left:373.5px;top:347px;width:20.5px;height:6.8px;line-height:6.8px;font-size:6px;color:#333;font-weight:normal;text-align:center;">STOP</div>
<div class="a" style="left:647px;top:346.7px;width:20.3px;height:7px;background:#d0d0d0;border-radius:1px"></div>
<div class="a t" style="left:647px;top:346.7px;width:20.3px;height:7px;line-height:7px;font-size:6px;color:#333;font-weight:normal;text-align:center;">STOP</div>
<div class="a" style="left:869.5px;top:150.6px;width:20.5px;height:6px;background:#d0d0d0;border-radius:1px"></div>
<div class="a t" style="left:869.5px;top:150.6px;width:20.5px;height:6px;line-height:6px;font-size:6px;color:#333;font-weight:normal;text-align:center;">STOP</div>
<div class="a t" style="left:487.5px;top:327.5px;width:18px;height:6px;line-height:6px;font-size:6px;color:#ddd;font-weight:normal;text-align:left;">OČ4</div>
<div class="a t" style="left:556px;top:327.5px;width:18px;height:6px;line-height:6px;font-size:6px;color:#ddd;font-weight:normal;text-align:left;">OČ5</div>
<div class="a t" style="left:624.5px;top:328px;width:18px;height:6px;line-height:6px;font-size:6px;color:#ddd;font-weight:normal;text-align:left;">NČ6</div>
<div class="a t" style="left:846.5px;top:128px;width:18px;height:6px;line-height:6px;font-size:5.5px;color:#ccc;font-weight:normal;text-align:left;">CC7</div>
<div class="a t" style="left:543.8px;top:365px;width:12px;height:6px;line-height:6px;font-size:5.5px;color:#e8e8e8;font-weight:bold;text-align:left;">0 %</div>
<div class="a" style="left:706.9px;top:155.6px;width:58.4px;height:119.7px;background:linear-gradient(90deg,#8a8a8a 0%,#c8c8c8 30%,#d4d4d4 40%,#b0b0b0 70%,#8a8a8a 100%);border-radius:50%/14%"></div>
<div class="a" style="left:715.8px;top:170.9px;width:34.4px;height:25.5px;background:#555"></div>
<div class="a" style="left:716.5px;top:171.6px;width:33px;height:7.6px;background:#f6f6f6"></div>
<div class="a t" style="left:716.5px;top:171.6px;width:33px;height:7.6px;line-height:7.6px;font-size:7px;color:#111;font-weight:normal;text-align:center;">51.1 °C</div>
<div class="a" style="left:716.5px;top:179.2px;width:33px;height:7.6px;background:#111"></div>
<div class="a t" style="left:716.5px;top:179.2px;width:33px;height:7.6px;line-height:7.6px;font-size:5.5px;color:#eee;font-weight:normal;text-align:center;">BT6</div>
<div class="a" style="left:716.5px;top:186.8px;width:33px;height:8.9px;background:#f4f040"></div>
<div class="a t" style="left:716.5px;top:186.8px;width:33px;height:8.9px;line-height:8.9px;font-size:7px;color:#222;font-weight:normal;text-align:center;">52 °C</div>
<svg class="a" style="left:706.9px;top:0" width="58.4" height="512"><path d="M0 225.3 H48.4 Q52.4 225.3 52.4 228.83 Q52.4 232.36 48.4 232.36 H8 Q4 232.36 4 235.89000000000001 Q4 239.42000000000002 8 239.42000000000002 H48.4 Q52.4 239.42000000000002 52.4 242.95000000000002 Q52.4 246.48000000000002 48.4 246.48000000000002 H8 Q4 246.48000000000002 4 250.01000000000002 Q4 253.54000000000002 8 253.54000000000002 H48.4 Q52.4 253.54000000000002 52.4 257.07 Q52.4 260.6 48.4 260.6 H0" fill="none" stroke="#f28a1e" stroke-width="2.9"/></svg>
<div class="a" style="left:788.5px;top:154.5px;width:61.5px;height:122.4px;background:linear-gradient(90deg,#8a8a8a 0%,#c8c8c8 30%,#d4d4d4 40%,#b0b0b0 70%,#8a8a8a 100%);border-radius:50%/14%"></div>
<div class="a" style="left:799.5999999999999px;top:170.9px;width:34.4px;height:25.5px;background:#555"></div>
<div class="a" style="left:800.3px;top:171.6px;width:33px;height:7.6px;background:#f6f6f6"></div>
<div class="a t" style="left:800.3px;top:171.6px;width:33px;height:7.6px;line-height:7.6px;font-size:7px;color:#111;font-weight:normal;text-align:center;">51.1 °C</div>
<div class="a" style="left:800.3px;top:179.2px;width:33px;height:7.6px;background:#111"></div>
<div class="a t" style="left:800.3px;top:179.2px;width:33px;height:7.6px;line-height:7.6px;font-size:5.5px;color:#eee;font-weight:normal;text-align:center;">BT7</div>
<div class="a" style="left:800.3px;top:186.8px;width:33px;height:8.9px;background:#f4f040"></div>
<div class="a t" style="left:800.3px;top:186.8px;width:33px;height:8.9px;line-height:8.9px;font-size:7px;color:#222;font-weight:normal;text-align:center;">52 °C</div>
<svg class="a" style="left:788.5px;top:0" width="61.5" height="512"><path d="M0 225.3 H51.5 Q55.5 225.3 55.5 228.83 Q55.5 232.36 51.5 232.36 H8 Q4 232.36 4 235.89000000000001 Q4 239.42000000000002 8 239.42000000000002 H51.5 Q55.5 239.42000000000002 55.5 242.95000000000002 Q55.5 246.48000000000002 51.5 246.48000000000002 H8 Q4 246.48000000000002 4 250.01000000000002 Q4 253.54000000000002 8 253.54000000000002 H51.5 Q55.5 253.54000000000002 55.5 257.07 Q55.5 260.6 51.5 260.6 H0" fill="none" stroke="#f28a1e" stroke-width="2.9"/></svg>
<div class="a t" style="left:803px;top:102px;width:30px;height:8px;line-height:8px;font-size:6.5px;color:#fff;font-weight:bold;text-align:center;">DHW</div>
<div class="a t" style="left:850px;top:102px;width:30px;height:8px;line-height:8px;font-size:6.5px;color:#fff;font-weight:bold;text-align:center;">CHW</div>
<div class="a t" style="left:862px;top:250px;width:36px;height:8px;line-height:8px;font-size:6.5px;color:#fff;font-weight:bold;text-align:center;">DCW</div>
<div class="a t" style="left:773px;top:281.5px;width:40px;height:6px;line-height:6px;font-size:7px;color:#fff;font-weight:bold;text-align:center;">VZT19</div>
<div class="a" style="left:693.9px;top:290.5px;width:82.6px;height:24.3px;background:#a5c4c8;border:1px solid #d8e8ea;border-radius:2px;box-sizing:border-box"></div>
<div class="a t" style="left:697px;top:292.0px;width:40px;height:8px;line-height:8px;font-size:7px;color:#8a1a9a;font-weight:bold;text-align:left;">VZT19</div>
<div class="a t" style="left:697px;top:301.8px;width:50px;height:9px;line-height:9px;font-size:6.8px;color:#1e1e1e;font-weight:normal;text-align:left;">Žádaná prostoru</div>
<div class="a" style="left:748px;top:301.8px;width:25.5px;height:9.6px;background:#eefa00;border:1px solid #888;box-sizing:border-box"></div>
<div class="a t" style="left:748px;top:301.8px;width:25.5px;height:9.6px;line-height:9.6px;font-size:6.8px;color:#111;font-weight:normal;text-align:center;">15 °C</div>
<div class="a" style="left:783.3px;top:290.5px;width:108.7px;height:24.3px;background:#c4c4c4;border:1px solid #e8e8e8;box-sizing:border-box"></div>
<svg class="a" style="left:794px;top:292.5px" width="7" height="21"><rect width="7" height="21" fill="#22dd22"/><path d="M0 2 L6 6 L0 10 L6 14 L0 18 L6 21" stroke="#0a6a0a" stroke-width="0.8" fill="none"/></svg>
<svg class="a" style="left:810.8px;top:292.0px" width="21" height="21"><circle cx="10" cy="10" r="10" fill="#f6f6f6"/><path d="M13.00 10.00 Q16.86 11.39 17.27 16.12" stroke="#5a5a5a" stroke-width="1.1" fill="none"/><path d="M12.60 11.50 Q15.25 14.63 13.23 18.93" stroke="#5a5a5a" stroke-width="1.1" fill="none"/><path d="M11.50 12.60 Q12.23 16.64 8.33 19.35" stroke="#5a5a5a" stroke-width="1.1" fill="none"/><path d="M10.00 13.00 Q8.61 16.86 3.88 17.27" stroke="#5a5a5a" stroke-width="1.1" fill="none"/><path d="M8.50 12.60 Q5.37 15.25 1.07 13.23" stroke="#5a5a5a" stroke-width="1.1" fill="none"/><path d="M7.40 11.50 Q3.36 12.23 0.65 8.33" stroke="#5a5a5a" stroke-width="1.1" fill="none"/><path d="M7.00 10.00 Q3.14 8.61 2.73 3.88" stroke="#5a5a5a" stroke-width="1.1" fill="none"/><path d="M7.40 8.50 Q4.75 5.37 6.77 1.07" stroke="#5a5a5a" stroke-width="1.1" fill="none"/><path d="M8.50 7.40 Q7.77 3.36 11.67 0.65" stroke="#5a5a5a" stroke-width="1.1" fill="none"/><path d="M10.00 7.00 Q11.39 3.14 16.12 2.73" stroke="#5a5a5a" stroke-width="1.1" fill="none"/><path d="M11.50 7.40 Q14.63 4.75 18.93 6.77" stroke="#5a5a5a" stroke-width="1.1" fill="none"/><path d="M12.60 8.50 Q16.64 7.77 19.35 11.67" stroke="#5a5a5a" stroke-width="1.1" fill="none"/></svg>
<div class="a" style="left:830px;top:306.0px;width:21.5px;height:6.6px;background:#d4d4d4;border:1px solid #888;border-radius:1px;box-sizing:border-box"></div>
<div class="a t" style="left:830px;top:306.0px;width:21.5px;height:6.6px;line-height:6.6px;font-size:6.2px;color:#222;font-weight:normal;text-align:center;">STOP</div>
<svg class="a" style="left:857px;top:292.5px" width="11" height="21"><rect width="11" height="21" fill="#f2f2f2"/><path d="M1 20 L10 2" stroke="#888" stroke-width="0.8"/><circle cx="3" cy="5" r="0.7" fill="#333"/></svg>
<div class="a t" style="left:857px;top:306.0px;width:12px;height:6.6px;line-height:6.6px;font-size:5.5px;color:#111;font-weight:bold;text-align:center;">0 %</div>
<div class="a" style="left:869.3px;top:306.0px;width:21px;height:6.6px;background:#d4d4d4;border:1px solid #888;border-radius:1px;box-sizing:border-box"></div>
<div class="a t" style="left:869.3px;top:306.0px;width:21px;height:6.6px;line-height:6.6px;font-size:6.2px;color:#222;font-weight:normal;text-align:center;">STOP</div>
<div class="a t" style="left:773px;top:318.8px;width:40px;height:6px;line-height:6px;font-size:7px;color:#fff;font-weight:bold;text-align:center;">VZT20</div>
<div class="a" style="left:693.9px;top:327.8px;width:82.6px;height:24.3px;background:#a5c4c8;border:1px solid #d8e8ea;border-radius:2px;box-sizing:border-box"></div>
<div class="a t" style="left:697px;top:329.3px;width:40px;height:8px;line-height:8px;font-size:7px;color:#8a1a9a;font-weight:bold;text-align:left;">VZT20</div>
<div class="a t" style="left:697px;top:339.1px;width:50px;height:9px;line-height:9px;font-size:6.8px;color:#1e1e1e;font-weight:normal;text-align:left;">Žádaná prostoru</div>
<div class="a" style="left:748px;top:339.1px;width:25.5px;height:9.6px;background:#eefa00;border:1px solid #888;box-sizing:border-box"></div>
<div class="a t" style="left:748px;top:339.1px;width:25.5px;height:9.6px;line-height:9.6px;font-size:6.8px;color:#111;font-weight:normal;text-align:center;">15 °C</div>
<div class="a" style="left:783.3px;top:327.8px;width:108.7px;height:24.3px;background:#c4c4c4;border:1px solid #e8e8e8;box-sizing:border-box"></div>
<svg class="a" style="left:794px;top:329.8px" width="7" height="21"><rect width="7" height="21" fill="#22dd22"/><path d="M0 2 L6 6 L0 10 L6 14 L0 18 L6 21" stroke="#0a6a0a" stroke-width="0.8" fill="none"/></svg>
<svg class="a" style="left:810.8px;top:329.3px" width="21" height="21"><circle cx="10" cy="10" r="10" fill="#f6f6f6"/><path d="M13.00 10.00 Q16.86 11.39 17.27 16.12" stroke="#5a5a5a" stroke-width="1.1" fill="none"/><path d="M12.60 11.50 Q15.25 14.63 13.23 18.93" stroke="#5a5a5a" stroke-width="1.1" fill="none"/><path d="M11.50 12.60 Q12.23 16.64 8.33 19.35" stroke="#5a5a5a" stroke-width="1.1" fill="none"/><path d="M10.00 13.00 Q8.61 16.86 3.88 17.27" stroke="#5a5a5a" stroke-width="1.1" fill="none"/><path d="M8.50 12.60 Q5.37 15.25 1.07 13.23" stroke="#5a5a5a" stroke-width="1.1" fill="none"/><path d="M7.40 11.50 Q3.36 12.23 0.65 8.33" stroke="#5a5a5a" stroke-width="1.1" fill="none"/><path d="M7.00 10.00 Q3.14 8.61 2.73 3.88" stroke="#5a5a5a" stroke-width="1.1" fill="none"/><path d="M7.40 8.50 Q4.75 5.37 6.77 1.07" stroke="#5a5a5a" stroke-width="1.1" fill="none"/><path d="M8.50 7.40 Q7.77 3.36 11.67 0.65" stroke="#5a5a5a" stroke-width="1.1" fill="none"/><path d="M10.00 7.00 Q11.39 3.14 16.12 2.73" stroke="#5a5a5a" stroke-width="1.1" fill="none"/><path d="M11.50 7.40 Q14.63 4.75 18.93 6.77" stroke="#5a5a5a" stroke-width="1.1" fill="none"/><path d="M12.60 8.50 Q16.64 7.77 19.35 11.67" stroke="#5a5a5a" stroke-width="1.1" fill="none"/></svg>
<div class="a" style="left:830px;top:343.3px;width:21.5px;height:6.6px;background:#d4d4d4;border:1px solid #888;border-radius:1px;box-sizing:border-box"></div>
<div class="a t" style="left:830px;top:343.3px;width:21.5px;height:6.6px;line-height:6.6px;font-size:6.2px;color:#222;font-weight:normal;text-align:center;">STOP</div>
<svg class="a" style="left:857px;top:329.8px" width="11" height="21"><rect width="11" height="21" fill="#f2f2f2"/><path d="M1 20 L10 2" stroke="#888" stroke-width="0.8"/><circle cx="3" cy="5" r="0.7" fill="#333"/></svg>
<div class="a t" style="left:857px;top:343.3px;width:12px;height:6.6px;line-height:6.6px;font-size:5.5px;color:#111;font-weight:bold;text-align:center;">0 %</div>
<div class="a" style="left:869.3px;top:343.3px;width:21px;height:6.6px;background:#d4d4d4;border:1px solid #888;border-radius:1px;box-sizing:border-box"></div>
<div class="a t" style="left:869.3px;top:343.3px;width:21px;height:6.6px;line-height:6.6px;font-size:6.2px;color:#222;font-weight:normal;text-align:center;">STOP</div>
<svg class="a" style="left:31px;top:437px" width="18" height="27"><path d="M1 15.6 L8.5 21 L1 25.7 Z M16.3 15.6 L8.8 21 L16.3 25.7 Z" fill="#10e020"/><rect x="2.5" y="1.2" width="12.3" height="15.5" rx="2" fill="#2a2ad8"/><rect x="2.8" y="3" width="11.8" height="8.5" fill="#d8d8d8"/><rect x="10" y="5" width="3" height="5" rx="1" fill="#2222c0"/><path d="M7.5 11.5 V20 M9.7 11.5 V20" stroke="#ddd" stroke-width="0.8"/></svg>
<div class="a" style="left:419.5px;top:451.8px;width:469px;height:1.3px;background:#b8b8b8"></div>
<div class="a t" style="left:422px;top:456px;width:45px;height:11px;line-height:11px;font-size:7px;color:#fff;font-weight:bold;text-align:left;">ČSN 06 0310</div>
<div class="a" style="left:469px;top:456.2px;width:50px;height:10.8px;background:#06f006;border:1px solid #0a8a0a;box-sizing:border-box"></div>
<div class="a t" style="left:469px;top:456.2px;width:50px;height:10.8px;line-height:10.8px;font-size:5.4px;color:#143a14;font-weight:normal;text-align:center;">Vysoká teplota K12</div>
<div class="a" style="left:521.7px;top:456.2px;width:49.5px;height:10.8px;background:#06f006;border:1px solid #0a8a0a;box-sizing:border-box"></div>
<div class="a t" style="left:521.7px;top:456.2px;width:49.5px;height:10.8px;line-height:10.8px;font-size:5.4px;color:#143a14;font-weight:normal;text-align:center;">Vysoká teplota K34</div>
<div class="a" style="left:574px;top:456.2px;width:50.5px;height:10.8px;background:#06f006;border:1px solid #0a8a0a;box-sizing:border-box"></div>
<div class="a t" style="left:574px;top:456.2px;width:50.5px;height:10.8px;line-height:10.8px;font-size:6.8px;color:#143a14;font-weight:normal;text-align:center;">Nízký tlak</div>
<div class="a" style="left:627px;top:456.2px;width:49.5px;height:10.8px;background:#06f006;border:1px solid #0a8a0a;box-sizing:border-box"></div>
<div class="a t" style="left:627px;top:456.2px;width:49.5px;height:10.8px;line-height:10.8px;font-size:6.8px;color:#143a14;font-weight:normal;text-align:center;">Zaplavení</div>
<div class="a" style="left:678.5px;top:456.2px;width:50px;height:10.8px;background:#06f006;border:1px solid #0a8a0a;box-sizing:border-box"></div>
<div class="a t" style="left:678.5px;top:456.2px;width:50px;height:10.8px;line-height:10.8px;font-size:6.8px;color:#143a14;font-weight:normal;text-align:center;">T prostor</div>
<div class="a" style="left:732.6px;top:456.2px;width:50px;height:10.8px;background:#06f006;border:1px solid #0a8a0a;box-sizing:border-box"></div>
<div class="a t" style="left:732.6px;top:456.2px;width:50px;height:10.8px;line-height:10.8px;font-size:6.8px;color:#143a14;font-weight:normal;text-align:center;">CH4 2.st</div>
<div class="a" style="left:784.8px;top:456.2px;width:50.2px;height:10.8px;background:#06f006;border:1px solid #0a8a0a;box-sizing:border-box"></div>
<div class="a t" style="left:784.8px;top:456.2px;width:50.2px;height:10.8px;line-height:10.8px;font-size:6.8px;color:#143a14;font-weight:normal;text-align:center;">CO 2.st</div>
<div class="a" style="left:837.6px;top:456.2px;width:50.4px;height:10.8px;background:#06f006;border:1px solid #0a8a0a;box-sizing:border-box"></div>
<div class="a t" style="left:837.6px;top:456.2px;width:50.4px;height:10.8px;line-height:10.8px;font-size:6.8px;color:#143a14;font-weight:normal;text-align:center;">STOP</div>
<div class="a" style="left:732.6px;top:438.9px;width:50px;height:10.8px;background:#06f006;border:1px solid #0a8a0a;box-sizing:border-box"></div>
<div class="a t" style="left:732.6px;top:438.9px;width:50px;height:10.8px;line-height:10.8px;font-size:6.8px;color:#143a14;font-weight:normal;text-align:center;">CH4 1.st</div>
<div class="a" style="left:784.8px;top:438.9px;width:50.2px;height:10.8px;background:#06f006;border:1px solid #0a8a0a;box-sizing:border-box"></div>
<div class="a t" style="left:784.8px;top:438.9px;width:50.2px;height:10.8px;line-height:10.8px;font-size:6.8px;color:#143a14;font-weight:normal;text-align:center;">CO 1.st</div>
<div class="a" style="left:5px;top:469.5px;width:918px;height:42.5px;background:#767676"></div>
<div class="a" style="left:10.5px;top:474px;width:393.5px;height:34px;background:#fff"></div>
<div class="a" style="left:10.5px;top:474px;width:393.5px;height:9px;background:linear-gradient(#fff,#f0f0f0);border-bottom:1px solid #ddd;box-sizing:border-box"></div>
<div class="a t" style="left:12.5px;top:474px;width:59px;height:9px;line-height:9px;font-size:5.3px;color:#222;font-weight:normal;text-align:left;">Zdroj</div>
<div class="a t" style="left:71.5px;top:474px;width:58px;height:9px;line-height:9px;font-size:5.3px;color:#222;font-weight:normal;text-align:left;">Popis</div>
<div class="a" style="left:69.5px;top:474px;width:1px;height:9px;background:#ddd"></div>
<div class="a t" style="left:129.5px;top:474px;width:59px;height:9px;line-height:9px;font-size:5.3px;color:#222;font-weight:normal;text-align:left;">Komentář</div>
<div class="a" style="left:127.5px;top:474px;width:1px;height:9px;background:#ddd"></div>
<div class="a t" style="left:188.5px;top:474px;width:62.5px;height:9px;line-height:9px;font-size:5.3px;color:#222;font-weight:normal;text-align:left;">▲ Čas vzniku</div>
<div class="a" style="left:186.5px;top:474px;width:1px;height:9px;background:#ddd"></div>
<div class="a t" style="left:251.0px;top:474px;width:63.8px;height:9px;line-height:9px;font-size:5.3px;color:#222;font-weight:normal;text-align:left;">Čas zániku</div>
<div class="a" style="left:249.0px;top:474px;width:1px;height:9px;background:#ddd"></div>
<div class="a t" style="left:314.8px;top:474px;width:63.7px;height:9px;line-height:9px;font-size:5.3px;color:#222;font-weight:normal;text-align:left;">Čas kvitace</div>
<div class="a" style="left:312.8px;top:474px;width:1px;height:9px;background:#ddd"></div>
<div class="a t" style="left:378.5px;top:474px;width:27.5px;height:9px;line-height:9px;font-size:5.3px;color:#222;font-weight:normal;text-align:left;">Priorita</div>
<div class="a" style="left:376.5px;top:474px;width:1px;height:9px;background:#ddd"></div>
<div class="a t" style="left:12.5px;top:483px;width:59px;height:8px;line-height:8px;font-size:5.5px;color:#1a1ad0;font-weight:normal;text-align:left;">T_AKU_TT121</div>
<div class="a t" style="left:71.5px;top:483px;width:58px;height:8px;line-height:8px;font-size:5.5px;color:#1a1ad0;font-weight:normal;text-align:left;">Horní mez (>17)</div>
<div class="a t" style="left:129.5px;top:483px;width:59px;height:8px;line-height:8px;font-size:5.5px;color:#1a1ad0;font-weight:normal;text-align:left;">max 17.2633</div>
<div class="a t" style="left:188.5px;top:483px;width:62.5px;height:8px;line-height:8px;font-size:5.5px;color:#1a1ad0;font-weight:normal;text-align:left;">25.08.2025 04:17:36</div>
<div class="a t" style="left:251.0px;top:483px;width:63.8px;height:8px;line-height:8px;font-size:5.5px;color:#1a1ad0;font-weight:normal;text-align:left;">25.08.2025 04:20:55</div>
<div class="a t" style="left:314.8px;top:483px;width:63.7px;height:8px;line-height:8px;font-size:5.5px;color:#1a1ad0;font-weight:normal;text-align:left;"></div>
<div class="a t" style="left:378.5px;top:483px;width:27.5px;height:8px;line-height:8px;font-size:5.5px;color:#1a1ad0;font-weight:normal;text-align:left;">0</div>
<div class="a t" style="left:12.5px;top:491px;width:59px;height:8px;line-height:8px;font-size:5.5px;color:#e01818;font-weight:normal;text-align:left;">CH01_FL2_porucha</div>
<div class="a t" style="left:71.5px;top:491px;width:58px;height:8px;line-height:8px;font-size:5.5px;color:#e01818;font-weight:normal;text-align:left;">Nedostatečný průtok...</div>
<div class="a t" style="left:129.5px;top:491px;width:59px;height:8px;line-height:8px;font-size:5.5px;color:#e01818;font-weight:normal;text-align:left;"></div>
<div class="a t" style="left:188.5px;top:491px;width:62.5px;height:8px;line-height:8px;font-size:5.5px;color:#e01818;font-weight:normal;text-align:left;">25.08.2025 05:27:22</div>
<div class="a t" style="left:251.0px;top:491px;width:63.8px;height:8px;line-height:8px;font-size:5.5px;color:#e01818;font-weight:normal;text-align:left;"></div>
<div class="a t" style="left:314.8px;top:491px;width:63.7px;height:8px;line-height:8px;font-size:5.5px;color:#e01818;font-weight:normal;text-align:left;"></div>
<div class="a t" style="left:378.5px;top:491px;width:27.5px;height:8px;line-height:8px;font-size:5.5px;color:#e01818;font-weight:normal;text-align:left;">0</div>
<div class="a" style="left:10.5px;top:499px;width:393.5px;height:8px;background:#cfcfcf;border:1px solid #888;box-sizing:border-box"></div>
<div class="a t" style="left:12.5px;top:499px;width:59px;height:8px;line-height:8px;font-size:5.5px;color:#1a1ad0;font-weight:normal;text-align:left;">PowerFactorTotal</div>
<div class="a t" style="left:71.5px;top:499px;width:58px;height:8px;line-height:8px;font-size:5.5px;color:#1a1ad0;font-weight:normal;text-align:left;">Horní mez (>1)</div>
<div class="a t" style="left:129.5px;top:499px;width:59px;height:8px;line-height:8px;font-size:5.5px;color:#1a1ad0;font-weight:normal;text-align:left;">0.996229</div>
<div class="a t" style="left:188.5px;top:499px;width:62.5px;height:8px;line-height:8px;font-size:5.5px;color:#1a1ad0;font-weight:normal;text-align:left;">25.08.2025 08:03:12</div>
<div class="a t" style="left:251.0px;top:499px;width:63.8px;height:8px;line-height:8px;font-size:5.5px;color:#1a1ad0;font-weight:normal;text-align:left;">25.08.2025 08:03:42</div>
<div class="a t" style="left:314.8px;top:499px;width:63.7px;height:8px;line-height:8px;font-size:5.5px;color:#1a1ad0;font-weight:normal;text-align:left;"></div>
<div class="a t" style="left:378.5px;top:499px;width:27.5px;height:8px;line-height:8px;font-size:5.5px;color:#1a1ad0;font-weight:normal;text-align:left;">0</div>
<div class="a" style="left:404px;top:474px;width:10px;height:33px;background:#e8e8e8"></div>
<div class="a" style="left:409px;top:490px;width:1.5px;height:10px;background:#666"></div>
<div class="a" style="left:416.3px;top:474px;width:220.5px;height:34px;background:#fff"></div>
<div class="a" style="left:416.3px;top:474px;width:220.5px;height:9px;background:linear-gradient(#fff,#f0f0f0);border-bottom:1px solid #ddd;box-sizing:border-box"></div>
<div class="a t" style="left:418.3px;top:474px;width:69.7px;height:9px;line-height:9px;font-size:5.3px;color:#222;font-weight:normal;text-align:left;">Popis</div>
<div class="a t" style="left:488.0px;top:474px;width:77.3px;height:9px;line-height:9px;font-size:5.3px;color:#222;font-weight:normal;text-align:left;">Zdroj</div>
<div class="a" style="left:486.0px;top:474px;width:1px;height:9px;background:#ddd"></div>
<div class="a t" style="left:565.3px;top:474px;width:64px;height:9px;line-height:9px;font-size:5.3px;color:#222;font-weight:normal;text-align:left;">▲ Čas vzniku</div>
<div class="a" style="left:563.3px;top:474px;width:1px;height:9px;background:#ddd"></div>
<div class="a t" style="left:418.3px;top:483px;width:69.7px;height:8px;line-height:8px;font-size:5.5px;color:#222;font-weight:normal;text-align:left;">Value = 0</div>
<div class="a t" style="left:488.0px;top:483px;width:77.3px;height:8px;line-height:8px;font-size:5.5px;color:#222;font-weight:normal;text-align:left;">OC_CHOD</div>
<div class="a t" style="left:565.3px;top:483px;width:64px;height:8px;line-height:8px;font-size:5.5px;color:#222;font-weight:normal;text-align:left;">25.08.2025 08:14:45</div>
<div class="a t" style="left:418.3px;top:491px;width:69.7px;height:8px;line-height:8px;font-size:5.5px;color:#222;font-weight:normal;text-align:left;">Value = 1</div>
<div class="a t" style="left:488.0px;top:491px;width:77.3px;height:8px;line-height:8px;font-size:5.5px;color:#222;font-weight:normal;text-align:left;">HUM_CHOD</div>
<div class="a t" style="left:565.3px;top:491px;width:64px;height:8px;line-height:8px;font-size:5.5px;color:#222;font-weight:normal;text-align:left;">25.08.2025 08:14:45</div>
<div class="a t" style="left:418.3px;top:499px;width:69.7px;height:8px;line-height:8px;font-size:5.5px;color:#222;font-weight:normal;text-align:left;">Value = 0</div>
<div class="a t" style="left:488.0px;top:499px;width:77.3px;height:8px;line-height:8px;font-size:5.5px;color:#222;font-weight:normal;text-align:left;">TCa_CHOD</div>
<div class="a t" style="left:565.3px;top:499px;width:64px;height:8px;line-height:8px;font-size:5.5px;color:#222;font-weight:normal;text-align:left;">25.08.2025 08:14:45</div>
<div class="a" style="left:627px;top:474px;width:9.5px;height:33px;background:#f0f0f0"></div>
<div class="a" style="left:640.8px;top:473.3px;width:249.2px;height:35.4px;background:#fff;box-shadow:0 0 0 1px #a0a0a0"></div>
<svg class="a" style="left:640px;top:473px" width="252" height="38"><g fill="none" stroke="#1c3862" stroke-width="3.8" stroke-linejoin="round"><path d="M26 6 H11 Q7.5 6 7.5 9.5 V13 Q7.5 16.5 11 16.5 H22.5 Q26 16.5 26 20 V23.5 Q26 27 22.5 27 H5.5"/><path d="M30 11.5 V23.5 Q30 27 33.5 27 H45 Q48.5 27 48.5 23.5 V11.5"/><path d="M107 11 L117.5 20.5 L128 11 M117.5 20.5 V29"/><path d="M133 29.5 V6 L151.5 24 L170 6 V29.5"/><path d="M177.5 13 H196.5 Q200 13 200 16.5 V23.5 Q200 27 196.5 27 H177.5 Q174 27 174 23.5 V16.5 Q174 13 177.5 13 Z"/><path d="M204.5 29.5 V16.5 Q204.5 13 208 13 H221.5 Q225 13 225 16.5 V29.5"/><path d="M228 13 H247 M237.5 13 V29.5"/></g><g fill="none" stroke="#a8c41c" stroke-width="3.8" stroke-linejoin="round"><path d="M55 29.5 V16.5 Q55 13 58.5 13 H69.5 Q73 13 73 16.5 V29.5"/><path d="M80 29.5 V16.5 Q80 13 83.5 13 H99 Q102.5 13 102.5 16.5 V29.5"/></g></svg>
<svg class="a" style="left:860px;top:0" width="63" height="80"><circle cx="45" cy="34" r="31.5" fill="none" stroke="rgba(85,105,135,0.75)" stroke-width="2.2"/><rect x="23.5" y="18.3" width="19.3" height="12.5" fill="none" stroke="rgba(235,120,50,0.75)" stroke-width="1.4"/><path d="M33 31 V34" stroke="rgba(235,120,50,0.7)" stroke-width="1.4"/><path d="M43 25.6 H54 V35 M33 34 V43.2 H44" stroke="#c8682c" stroke-width="1" stroke-dasharray="1.2 1.2" fill="none"/><rect x="44.7" y="37.3" width="17.6" height="12.5" fill="#8c8c8c" stroke="#d86a1c" stroke-width="1.6"/><path d="M54 50.5 V53" stroke="#d86a1c" stroke-width="2"/></svg>
</body></html>
